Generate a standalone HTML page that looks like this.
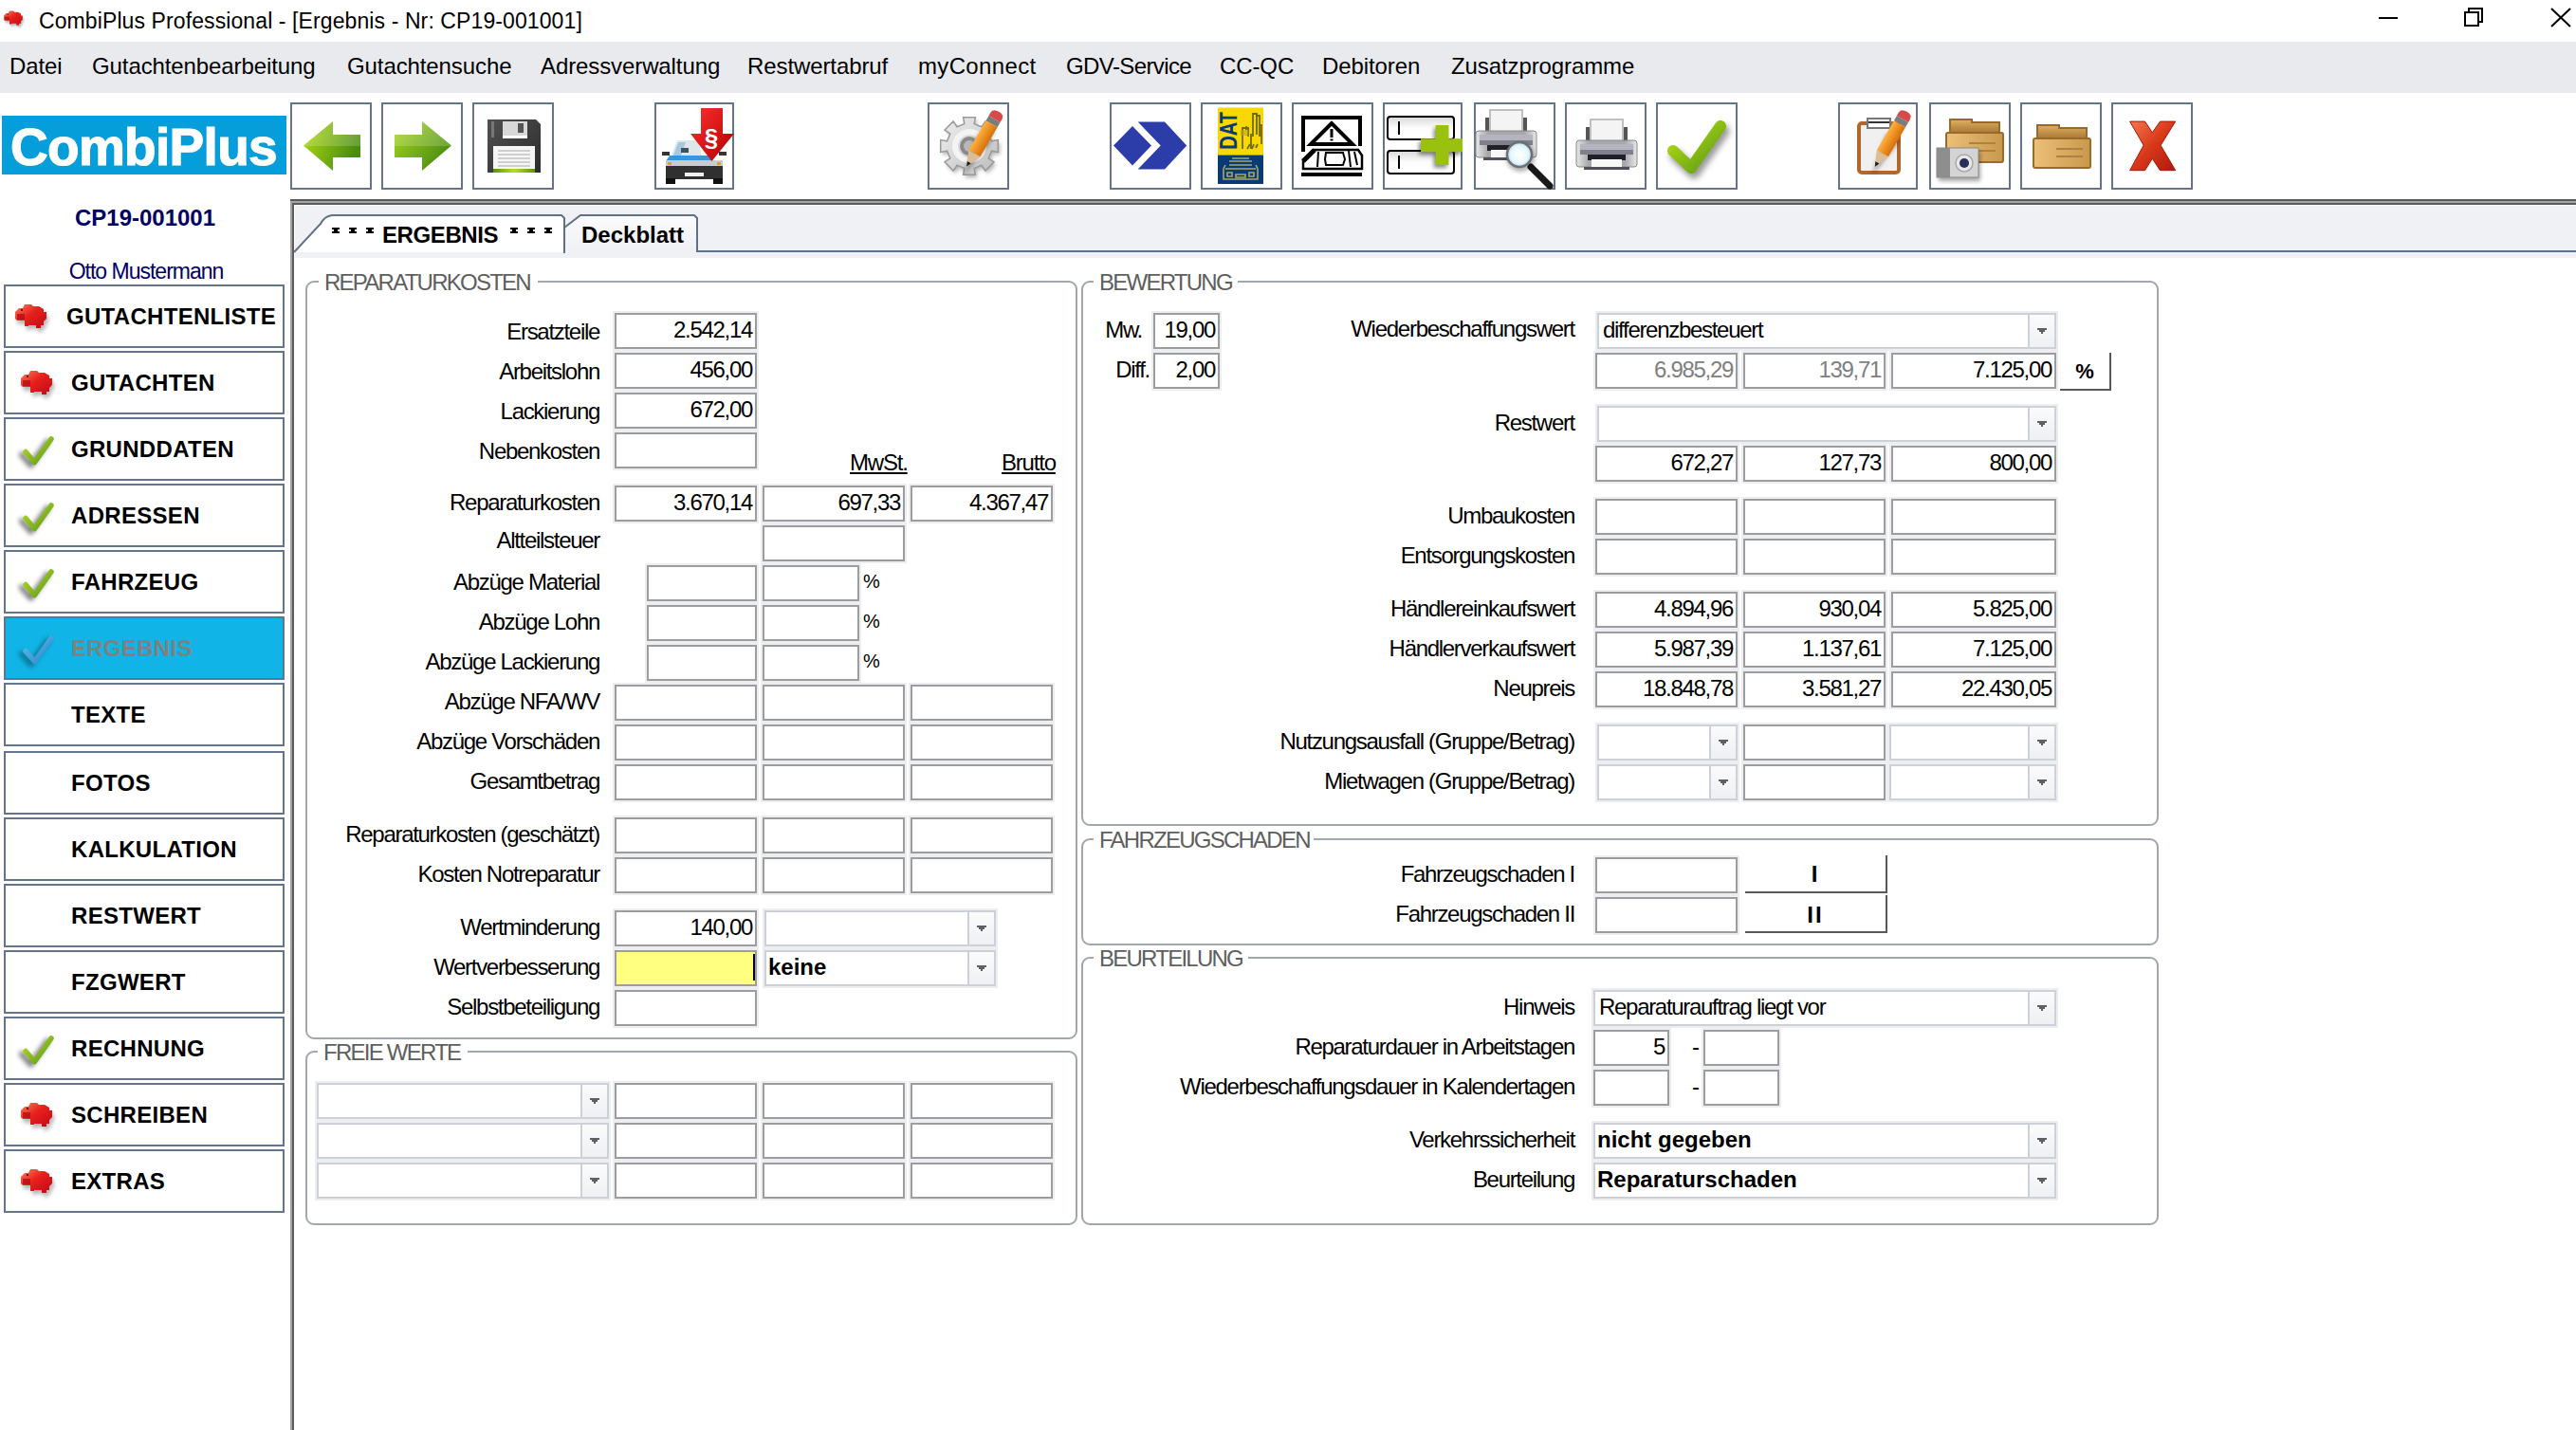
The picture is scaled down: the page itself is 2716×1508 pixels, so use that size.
<!DOCTYPE html><html><head><meta charset="utf-8"><style>
html,body{margin:0;padding:0;}
body{width:2716px;height:1508px;position:relative;overflow:hidden;background:#fff;font-family:"Liberation Sans", sans-serif;}
.t{position:absolute;white-space:pre;font-family:"Liberation Sans", sans-serif;}
</style></head><body>
<div class="t" style="left:41px;top:11px;font-size:23px;line-height:23px;font-weight:400;color:#000;letter-spacing:0.1px;">CombiPlus Professional - [Ergebnis - Nr: CP19-001001]</div>
<div style="position:absolute;left:2508px;top:18px;width:20px;height:2px;box-sizing:border-box;background:#000;"></div>
<div style="position:absolute;left:2598px;top:12px;width:16px;height:16px;box-sizing:border-box;border:2px solid #000;background:#fff;"></div>
<div style="position:absolute;left:2602px;top:8px;width:16px;height:4px;border-top:2px solid #000;border-right:2px solid #000;box-sizing:border-box;"></div>
<div style="position:absolute;left:2614px;top:8px;width:4px;height:16px;border-right:2px solid #000;box-sizing:border-box;"></div>
<div style="position:absolute;left:2602px;top:8px;width:2px;height:4px;box-sizing:border-box;background:#000;"></div>
<div style="position:absolute;left:2614px;top:22px;width:4px;height:2px;box-sizing:border-box;background:#000;"></div>
<svg style="position:absolute;left:2689px;top:8px" width="22" height="21"><path d="M1 1L21 20M21 1L1 20" stroke="#000" stroke-width="2"/></svg>
<div style="position:absolute;left:0px;top:44px;width:2716px;height:54px;box-sizing:border-box;background:#e9eaee;"></div>
<div class="t" style="left:10px;top:58px;font-size:24px;line-height:24px;font-weight:400;color:#000;letter-spacing:-0.1px;">Datei</div>
<div class="t" style="left:97px;top:58px;font-size:24px;line-height:24px;font-weight:400;color:#000;letter-spacing:-0.1px;">Gutachtenbearbeitung</div>
<div class="t" style="left:366px;top:58px;font-size:24px;line-height:24px;font-weight:400;color:#000;letter-spacing:-0.1px;">Gutachtensuche</div>
<div class="t" style="left:570px;top:58px;font-size:24px;line-height:24px;font-weight:400;color:#000;letter-spacing:-0.1px;">Adressverwaltung</div>
<div class="t" style="left:788px;top:58px;font-size:24px;line-height:24px;font-weight:400;color:#000;letter-spacing:-0.1px;">Restwertabruf</div>
<div class="t" style="left:968px;top:58px;font-size:24px;line-height:24px;font-weight:400;color:#000;letter-spacing:0.35px;">myConnect</div>
<div class="t" style="left:1124px;top:58px;font-size:24px;line-height:24px;font-weight:400;color:#000;letter-spacing:-0.6px;">GDV-Service</div>
<div class="t" style="left:1286px;top:58px;font-size:24px;line-height:24px;font-weight:400;color:#000;letter-spacing:-0.1px;">CC-QC</div>
<div class="t" style="left:1394px;top:58px;font-size:24px;line-height:24px;font-weight:400;color:#000;letter-spacing:-0.1px;">Debitoren</div>
<div class="t" style="left:1530px;top:58px;font-size:24px;line-height:24px;font-weight:400;color:#000;letter-spacing:-0.1px;">Zusatzprogramme</div>
<div style="position:absolute;left:2px;top:122px;width:300px;height:62px;box-sizing:border-box;background:#069ddb;"></div>
<div class="t" style="left:11px;top:128px;font-size:55px;line-height:55px;font-weight:700;color:#fff;letter-spacing:-0.7px;-webkit-text-stroke:1.2px #fff;">CombiPlus</div>
<div style="position:absolute;left:306px;top:108px;width:86px;height:92px;box-sizing:border-box;border:2px solid #63748c;background:#fff;"></div>
<div style="position:absolute;left:402px;top:108px;width:86px;height:92px;box-sizing:border-box;border:2px solid #63748c;background:#fff;"></div>
<div style="position:absolute;left:498px;top:108px;width:86px;height:92px;box-sizing:border-box;border:2px solid #63748c;background:#fff;"></div>
<div style="position:absolute;left:690px;top:108px;width:84px;height:92px;box-sizing:border-box;border:2px solid #63748c;background:#fff;"></div>
<div style="position:absolute;left:978px;top:108px;width:86px;height:92px;box-sizing:border-box;border:2px solid #63748c;background:#fff;"></div>
<div style="position:absolute;left:1170px;top:108px;width:86px;height:92px;box-sizing:border-box;border:2px solid #63748c;background:#fff;"></div>
<div style="position:absolute;left:1266px;top:108px;width:86px;height:92px;box-sizing:border-box;border:2px solid #63748c;background:#fff;"></div>
<div style="position:absolute;left:1362px;top:108px;width:86px;height:92px;box-sizing:border-box;border:2px solid #63748c;background:#fff;"></div>
<div style="position:absolute;left:1458px;top:108px;width:84px;height:92px;box-sizing:border-box;border:2px solid #63748c;background:#fff;"></div>
<div style="position:absolute;left:1554px;top:108px;width:86px;height:92px;box-sizing:border-box;border:2px solid #63748c;background:#fff;"></div>
<div style="position:absolute;left:1650px;top:108px;width:86px;height:92px;box-sizing:border-box;border:2px solid #63748c;background:#fff;"></div>
<div style="position:absolute;left:1746px;top:108px;width:86px;height:92px;box-sizing:border-box;border:2px solid #63748c;background:#fff;"></div>
<div style="position:absolute;left:1938px;top:108px;width:84px;height:92px;box-sizing:border-box;border:2px solid #63748c;background:#fff;"></div>
<div style="position:absolute;left:2034px;top:108px;width:86px;height:92px;box-sizing:border-box;border:2px solid #63748c;background:#fff;"></div>
<div style="position:absolute;left:2130px;top:108px;width:86px;height:92px;box-sizing:border-box;border:2px solid #63748c;background:#fff;"></div>
<div style="position:absolute;left:2226px;top:108px;width:86px;height:92px;box-sizing:border-box;border:2px solid #63748c;background:#fff;"></div>
<div class="t" style="left:-347px;width:1000px;text-align:center;top:218px;font-size:24px;line-height:24px;font-weight:700;color:#000066;letter-spacing:0px;">CP19-001001</div>
<div class="t" style="left:-346px;width:1000px;text-align:center;top:275px;font-size:23px;line-height:23px;font-weight:400;color:#000066;letter-spacing:-1.0px;">Otto Mustermann</div>
<div style="position:absolute;left:4px;top:300px;width:296px;height:67px;box-sizing:border-box;border:2px solid #63748c;background:#fff;"></div>
<div class="t" style="left:70px;top:322px;font-size:24px;line-height:24px;font-weight:700;color:#000;letter-spacing:0.3px;">GUTACHTENLISTE</div>
<div style="position:absolute;left:4px;top:370px;width:296px;height:67px;box-sizing:border-box;border:2px solid #63748c;background:#fff;"></div>
<div class="t" style="left:75px;top:392px;font-size:24px;line-height:24px;font-weight:700;color:#000;letter-spacing:0.3px;">GUTACHTEN</div>
<div style="position:absolute;left:4px;top:440px;width:296px;height:67px;box-sizing:border-box;border:2px solid #63748c;background:#fff;"></div>
<div class="t" style="left:75px;top:462px;font-size:24px;line-height:24px;font-weight:700;color:#000;letter-spacing:0.3px;">GRUNDDATEN</div>
<div style="position:absolute;left:4px;top:510px;width:296px;height:67px;box-sizing:border-box;border:2px solid #63748c;background:#fff;"></div>
<div class="t" style="left:75px;top:532px;font-size:24px;line-height:24px;font-weight:700;color:#000;letter-spacing:0.3px;">ADRESSEN</div>
<div style="position:absolute;left:4px;top:580px;width:296px;height:67px;box-sizing:border-box;border:2px solid #63748c;background:#fff;"></div>
<div class="t" style="left:75px;top:602px;font-size:24px;line-height:24px;font-weight:700;color:#000;letter-spacing:0.3px;">FAHRZEUG</div>
<div style="position:absolute;left:4px;top:650px;width:296px;height:67px;box-sizing:border-box;border:2px solid #63748c;background:#10b4e6;"></div>
<div class="t" style="left:75px;top:672px;font-size:24px;line-height:24px;font-weight:700;color:#808080;letter-spacing:0.3px;">ERGEBNIS</div>
<div style="position:absolute;left:4px;top:720px;width:296px;height:67px;box-sizing:border-box;border:2px solid #63748c;background:#fff;"></div>
<div class="t" style="left:75px;top:742px;font-size:24px;line-height:24px;font-weight:700;color:#000;letter-spacing:0.3px;">TEXTE</div>
<div style="position:absolute;left:4px;top:792px;width:296px;height:67px;box-sizing:border-box;border:2px solid #63748c;background:#fff;"></div>
<div class="t" style="left:75px;top:814px;font-size:24px;line-height:24px;font-weight:700;color:#000;letter-spacing:0.3px;">FOTOS</div>
<div style="position:absolute;left:4px;top:862px;width:296px;height:67px;box-sizing:border-box;border:2px solid #63748c;background:#fff;"></div>
<div class="t" style="left:75px;top:884px;font-size:24px;line-height:24px;font-weight:700;color:#000;letter-spacing:0.3px;">KALKULATION</div>
<div style="position:absolute;left:4px;top:932px;width:296px;height:67px;box-sizing:border-box;border:2px solid #63748c;background:#fff;"></div>
<div class="t" style="left:75px;top:954px;font-size:24px;line-height:24px;font-weight:700;color:#000;letter-spacing:0.3px;">RESTWERT</div>
<div style="position:absolute;left:4px;top:1002px;width:296px;height:67px;box-sizing:border-box;border:2px solid #63748c;background:#fff;"></div>
<div class="t" style="left:75px;top:1024px;font-size:24px;line-height:24px;font-weight:700;color:#000;letter-spacing:0.3px;">FZGWERT</div>
<div style="position:absolute;left:4px;top:1072px;width:296px;height:67px;box-sizing:border-box;border:2px solid #63748c;background:#fff;"></div>
<div class="t" style="left:75px;top:1094px;font-size:24px;line-height:24px;font-weight:700;color:#000;letter-spacing:0.3px;">RECHNUNG</div>
<div style="position:absolute;left:4px;top:1142px;width:296px;height:67px;box-sizing:border-box;border:2px solid #63748c;background:#fff;"></div>
<div class="t" style="left:75px;top:1164px;font-size:24px;line-height:24px;font-weight:700;color:#000;letter-spacing:0.3px;">SCHREIBEN</div>
<div style="position:absolute;left:4px;top:1212px;width:296px;height:67px;box-sizing:border-box;border:2px solid #63748c;background:#fff;"></div>
<div class="t" style="left:75px;top:1234px;font-size:24px;line-height:24px;font-weight:700;color:#000;letter-spacing:0.3px;">EXTRAS</div>
<div style="position:absolute;left:306px;top:210px;width:2410px;height:2px;box-sizing:border-box;background:#595959;"></div>
<div style="position:absolute;left:306px;top:212px;width:2410px;height:2px;box-sizing:border-box;background:#a3a3a3;"></div>
<div style="position:absolute;left:308px;top:214px;width:2408px;height:2px;box-sizing:border-box;background:#5c5c5c;"></div>
<div style="position:absolute;left:306px;top:212px;width:2px;height:1296px;box-sizing:border-box;background:#a3a3a3;"></div>
<div style="position:absolute;left:308px;top:214px;width:2px;height:1294px;box-sizing:border-box;background:#5c5c5c;"></div>
<div style="position:absolute;left:310px;top:216px;width:2406px;height:1292px;box-sizing:border-box;background:#fff;"></div>
<div style="position:absolute;left:310px;top:216px;width:2406px;height:56px;box-sizing:border-box;background:#f0f1f5;border-top:1px solid #fff;border-left:1px solid #fff;"></div>
<svg style="position:absolute;left:0;top:0" width="2716" height="300"><defs><linearGradient id="tg" x1="0" y1="0" x2="0" y2="1"><stop offset="0" stop-color="#fbfbfc"/><stop offset="1" stop-color="#eff0f4"/></linearGradient></defs><path d="M594 266V240L612 227H732L735 230V266Z" fill="url(#tg)"/><path d="M595 240L612 227H732L735 230V266" fill="none" stroke="#5f7189" stroke-width="2"/><path d="M735 265H2716" stroke="#5f7189" stroke-width="2"/><path d="M310 266L338 236Q342 228 350 227H592L595 230V266Z" fill="#fff"/><path d="M310 266L338 236Q342 228 350 227H592L595 230V267" fill="none" stroke="#5f7189" stroke-width="2"/></svg>
<div class="t" style="left:403px;top:236px;font-size:24px;line-height:24px;font-weight:700;color:#000;letter-spacing:-0.4px;">ERGEBNIS</div>
<svg style="position:absolute;left:350px;top:240px" width="8" height="6"><path d="M0 0H8V2H6V4H8V6H0V4H2V2H0Z" fill="#000"/></svg>
<svg style="position:absolute;left:368px;top:240px" width="8" height="6"><path d="M0 0H8V2H6V4H8V6H0V4H2V2H0Z" fill="#000"/></svg>
<svg style="position:absolute;left:386px;top:240px" width="8" height="6"><path d="M0 0H8V2H6V4H8V6H0V4H2V2H0Z" fill="#000"/></svg>
<svg style="position:absolute;left:538px;top:240px" width="8" height="6"><path d="M0 0H8V2H6V4H8V6H0V4H2V2H0Z" fill="#000"/></svg>
<svg style="position:absolute;left:556px;top:240px" width="8" height="6"><path d="M0 0H8V2H6V4H8V6H0V4H2V2H0Z" fill="#000"/></svg>
<svg style="position:absolute;left:574px;top:240px" width="8" height="6"><path d="M0 0H8V2H6V4H8V6H0V4H2V2H0Z" fill="#000"/></svg>
<div class="t" style="left:613px;top:236px;font-size:24px;line-height:24px;font-weight:700;color:#000;letter-spacing:0px;">Deckblatt</div>
<div style="position:absolute;left:322px;top:296px;width:814px;height:800px;box-sizing:border-box;border:2px solid #a2a7ad;border-radius:9px;"></div>
<div style="position:absolute;left:336px;top:294px;width:231px;height:8px;box-sizing:border-box;background:#fff;"></div>
<div class="t" style="left:342px;top:286px;font-size:24px;line-height:24px;font-weight:400;color:#5e5e5e;letter-spacing:-1.75px;">REPARATURKOSTEN</div>
<div style="position:absolute;left:322px;top:1108px;width:814px;height:184px;box-sizing:border-box;border:2px solid #a2a7ad;border-radius:9px;"></div>
<div style="position:absolute;left:335px;top:1106px;width:158px;height:8px;box-sizing:border-box;background:#fff;"></div>
<div class="t" style="left:341px;top:1098px;font-size:24px;line-height:24px;font-weight:400;color:#5e5e5e;letter-spacing:-1.75px;">FREIE WERTE</div>
<div style="position:absolute;left:1140px;top:296px;width:1136px;height:575px;box-sizing:border-box;border:2px solid #a2a7ad;border-radius:9px;"></div>
<div style="position:absolute;left:1153px;top:294px;width:152px;height:8px;box-sizing:border-box;background:#fff;"></div>
<div class="t" style="left:1159px;top:286px;font-size:24px;line-height:24px;font-weight:400;color:#5e5e5e;letter-spacing:-1.75px;">BEWERTUNG</div>
<div style="position:absolute;left:1140px;top:884px;width:1136px;height:113px;box-sizing:border-box;border:2px solid #a2a7ad;border-radius:9px;"></div>
<div style="position:absolute;left:1153px;top:882px;width:232px;height:8px;box-sizing:border-box;background:#fff;"></div>
<div class="t" style="left:1159px;top:874px;font-size:24px;line-height:24px;font-weight:400;color:#5e5e5e;letter-spacing:-1.75px;">FAHRZEUGSCHADEN</div>
<div style="position:absolute;left:1140px;top:1009px;width:1136px;height:283px;box-sizing:border-box;border:2px solid #a2a7ad;border-radius:9px;"></div>
<div style="position:absolute;left:1153px;top:1007px;width:163px;height:8px;box-sizing:border-box;background:#fff;"></div>
<div class="t" style="left:1159px;top:999px;font-size:24px;line-height:24px;font-weight:400;color:#5e5e5e;letter-spacing:-1.75px;">BEURTEILUNG</div>
<div class="t" style="left:-368px;width:1000px;text-align:right;top:338px;font-size:24px;line-height:24px;font-weight:400;color:#000;letter-spacing:-1.3px;">Ersatzteile</div>
<div style="position:absolute;left:646px;top:328px;width:154px;height:42px;box-sizing:border-box;border:2px solid #eceef2;"></div>
<div style="position:absolute;left:648px;top:330px;width:150px;height:38px;box-sizing:border-box;border:2px solid #9d9d9d;background:#fff;"></div>
<div class="t" style="left:-207px;width:1000px;text-align:right;top:336px;font-size:24px;line-height:24px;font-weight:400;color:#000;letter-spacing:-1.3px;">2.542,14</div>
<div class="t" style="left:-368px;width:1000px;text-align:right;top:380px;font-size:24px;line-height:24px;font-weight:400;color:#000;letter-spacing:-1.3px;">Arbeitslohn</div>
<div style="position:absolute;left:646px;top:370px;width:154px;height:42px;box-sizing:border-box;border:2px solid #eceef2;"></div>
<div style="position:absolute;left:648px;top:372px;width:150px;height:38px;box-sizing:border-box;border:2px solid #9d9d9d;background:#fff;"></div>
<div class="t" style="left:-207px;width:1000px;text-align:right;top:378px;font-size:24px;line-height:24px;font-weight:400;color:#000;letter-spacing:-1.3px;">456,00</div>
<div class="t" style="left:-368px;width:1000px;text-align:right;top:422px;font-size:24px;line-height:24px;font-weight:400;color:#000;letter-spacing:-1.3px;">Lackierung</div>
<div style="position:absolute;left:646px;top:412px;width:154px;height:42px;box-sizing:border-box;border:2px solid #eceef2;"></div>
<div style="position:absolute;left:648px;top:414px;width:150px;height:38px;box-sizing:border-box;border:2px solid #9d9d9d;background:#fff;"></div>
<div class="t" style="left:-207px;width:1000px;text-align:right;top:420px;font-size:24px;line-height:24px;font-weight:400;color:#000;letter-spacing:-1.3px;">672,00</div>
<div class="t" style="left:-368px;width:1000px;text-align:right;top:464px;font-size:24px;line-height:24px;font-weight:400;color:#000;letter-spacing:-1.3px;">Nebenkosten</div>
<div style="position:absolute;left:646px;top:454px;width:154px;height:42px;box-sizing:border-box;border:2px solid #eceef2;"></div>
<div style="position:absolute;left:648px;top:456px;width:150px;height:38px;box-sizing:border-box;border:2px solid #9d9d9d;background:#fff;"></div>
<div class="t" style="left:896px;top:476px;font-size:24px;line-height:24px;font-weight:400;color:#000;letter-spacing:-1.2px;text-decoration:underline;">MwSt.</div>
<div class="t" style="left:1056px;top:476px;font-size:24px;line-height:24px;font-weight:400;color:#000;letter-spacing:-1.2px;text-decoration:underline;">Brutto</div>
<div class="t" style="left:-368px;width:1000px;text-align:right;top:518px;font-size:24px;line-height:24px;font-weight:400;color:#000;letter-spacing:-1.3px;">Reparaturkosten</div>
<div style="position:absolute;left:646px;top:510px;width:154px;height:42px;box-sizing:border-box;border:2px solid #eceef2;"></div>
<div style="position:absolute;left:648px;top:512px;width:150px;height:38px;box-sizing:border-box;border:2px solid #9d9d9d;background:#fff;"></div>
<div class="t" style="left:-207px;width:1000px;text-align:right;top:518px;font-size:24px;line-height:24px;font-weight:400;color:#000;letter-spacing:-1.3px;">3.670,14</div>
<div style="position:absolute;left:802px;top:510px;width:154px;height:42px;box-sizing:border-box;border:2px solid #eceef2;"></div>
<div style="position:absolute;left:804px;top:512px;width:150px;height:38px;box-sizing:border-box;border:2px solid #9d9d9d;background:#fff;"></div>
<div class="t" style="left:-51px;width:1000px;text-align:right;top:518px;font-size:24px;line-height:24px;font-weight:400;color:#000;letter-spacing:-1.3px;">697,33</div>
<div style="position:absolute;left:958px;top:510px;width:154px;height:42px;box-sizing:border-box;border:2px solid #eceef2;"></div>
<div style="position:absolute;left:960px;top:512px;width:150px;height:38px;box-sizing:border-box;border:2px solid #9d9d9d;background:#fff;"></div>
<div class="t" style="left:105px;width:1000px;text-align:right;top:518px;font-size:24px;line-height:24px;font-weight:400;color:#000;letter-spacing:-1.3px;">4.367,47</div>
<div class="t" style="left:-368px;width:1000px;text-align:right;top:558px;font-size:24px;line-height:24px;font-weight:400;color:#000;letter-spacing:-1.3px;">Altteilsteuer</div>
<div style="position:absolute;left:802px;top:552px;width:154px;height:42px;box-sizing:border-box;border:2px solid #eceef2;"></div>
<div style="position:absolute;left:804px;top:554px;width:150px;height:38px;box-sizing:border-box;border:2px solid #9d9d9d;background:#fff;"></div>
<div class="t" style="left:-368px;width:1000px;text-align:right;top:602px;font-size:24px;line-height:24px;font-weight:400;color:#000;letter-spacing:-1.3px;">Abzüge Material</div>
<div style="position:absolute;left:680px;top:594px;width:120px;height:42px;box-sizing:border-box;border:2px solid #eceef2;"></div>
<div style="position:absolute;left:682px;top:596px;width:116px;height:38px;box-sizing:border-box;border:2px solid #9d9d9d;background:#fff;"></div>
<div style="position:absolute;left:802px;top:594px;width:106px;height:42px;box-sizing:border-box;border:2px solid #eceef2;"></div>
<div style="position:absolute;left:804px;top:596px;width:102px;height:38px;box-sizing:border-box;border:2px solid #9d9d9d;background:#fff;"></div>
<div class="t" style="left:910px;top:603px;font-size:20px;line-height:20px;font-weight:400;color:#000;letter-spacing:-1px;">%</div>
<div class="t" style="left:-368px;width:1000px;text-align:right;top:644px;font-size:24px;line-height:24px;font-weight:400;color:#000;letter-spacing:-1.3px;">Abzüge Lohn</div>
<div style="position:absolute;left:680px;top:636px;width:120px;height:42px;box-sizing:border-box;border:2px solid #eceef2;"></div>
<div style="position:absolute;left:682px;top:638px;width:116px;height:38px;box-sizing:border-box;border:2px solid #9d9d9d;background:#fff;"></div>
<div style="position:absolute;left:802px;top:636px;width:106px;height:42px;box-sizing:border-box;border:2px solid #eceef2;"></div>
<div style="position:absolute;left:804px;top:638px;width:102px;height:38px;box-sizing:border-box;border:2px solid #9d9d9d;background:#fff;"></div>
<div class="t" style="left:910px;top:645px;font-size:20px;line-height:20px;font-weight:400;color:#000;letter-spacing:-1px;">%</div>
<div class="t" style="left:-368px;width:1000px;text-align:right;top:686px;font-size:24px;line-height:24px;font-weight:400;color:#000;letter-spacing:-1.3px;">Abzüge Lackierung</div>
<div style="position:absolute;left:680px;top:678px;width:120px;height:42px;box-sizing:border-box;border:2px solid #eceef2;"></div>
<div style="position:absolute;left:682px;top:680px;width:116px;height:38px;box-sizing:border-box;border:2px solid #9d9d9d;background:#fff;"></div>
<div style="position:absolute;left:802px;top:678px;width:106px;height:42px;box-sizing:border-box;border:2px solid #eceef2;"></div>
<div style="position:absolute;left:804px;top:680px;width:102px;height:38px;box-sizing:border-box;border:2px solid #9d9d9d;background:#fff;"></div>
<div class="t" style="left:910px;top:687px;font-size:20px;line-height:20px;font-weight:400;color:#000;letter-spacing:-1px;">%</div>
<div class="t" style="left:-368px;width:1000px;text-align:right;top:728px;font-size:24px;line-height:24px;font-weight:400;color:#000;letter-spacing:-1.3px;">Abzüge NFA/WV</div>
<div style="position:absolute;left:646px;top:720px;width:154px;height:42px;box-sizing:border-box;border:2px solid #eceef2;"></div>
<div style="position:absolute;left:648px;top:722px;width:150px;height:38px;box-sizing:border-box;border:2px solid #9d9d9d;background:#fff;"></div>
<div style="position:absolute;left:802px;top:720px;width:154px;height:42px;box-sizing:border-box;border:2px solid #eceef2;"></div>
<div style="position:absolute;left:804px;top:722px;width:150px;height:38px;box-sizing:border-box;border:2px solid #9d9d9d;background:#fff;"></div>
<div style="position:absolute;left:958px;top:720px;width:154px;height:42px;box-sizing:border-box;border:2px solid #eceef2;"></div>
<div style="position:absolute;left:960px;top:722px;width:150px;height:38px;box-sizing:border-box;border:2px solid #9d9d9d;background:#fff;"></div>
<div class="t" style="left:-368px;width:1000px;text-align:right;top:770px;font-size:24px;line-height:24px;font-weight:400;color:#000;letter-spacing:-1.3px;">Abzüge Vorschäden</div>
<div style="position:absolute;left:646px;top:762px;width:154px;height:42px;box-sizing:border-box;border:2px solid #eceef2;"></div>
<div style="position:absolute;left:648px;top:764px;width:150px;height:38px;box-sizing:border-box;border:2px solid #9d9d9d;background:#fff;"></div>
<div style="position:absolute;left:802px;top:762px;width:154px;height:42px;box-sizing:border-box;border:2px solid #eceef2;"></div>
<div style="position:absolute;left:804px;top:764px;width:150px;height:38px;box-sizing:border-box;border:2px solid #9d9d9d;background:#fff;"></div>
<div style="position:absolute;left:958px;top:762px;width:154px;height:42px;box-sizing:border-box;border:2px solid #eceef2;"></div>
<div style="position:absolute;left:960px;top:764px;width:150px;height:38px;box-sizing:border-box;border:2px solid #9d9d9d;background:#fff;"></div>
<div class="t" style="left:-368px;width:1000px;text-align:right;top:812px;font-size:24px;line-height:24px;font-weight:400;color:#000;letter-spacing:-1.3px;">Gesamtbetrag</div>
<div style="position:absolute;left:646px;top:804px;width:154px;height:42px;box-sizing:border-box;border:2px solid #eceef2;"></div>
<div style="position:absolute;left:648px;top:806px;width:150px;height:38px;box-sizing:border-box;border:2px solid #9d9d9d;background:#fff;"></div>
<div style="position:absolute;left:802px;top:804px;width:154px;height:42px;box-sizing:border-box;border:2px solid #eceef2;"></div>
<div style="position:absolute;left:804px;top:806px;width:150px;height:38px;box-sizing:border-box;border:2px solid #9d9d9d;background:#fff;"></div>
<div style="position:absolute;left:958px;top:804px;width:154px;height:42px;box-sizing:border-box;border:2px solid #eceef2;"></div>
<div style="position:absolute;left:960px;top:806px;width:150px;height:38px;box-sizing:border-box;border:2px solid #9d9d9d;background:#fff;"></div>
<div class="t" style="left:-368px;width:1000px;text-align:right;top:868px;font-size:24px;line-height:24px;font-weight:400;color:#000;letter-spacing:-1.3px;">Reparaturkosten (geschätzt)</div>
<div style="position:absolute;left:646px;top:860px;width:154px;height:42px;box-sizing:border-box;border:2px solid #eceef2;"></div>
<div style="position:absolute;left:648px;top:862px;width:150px;height:38px;box-sizing:border-box;border:2px solid #9d9d9d;background:#fff;"></div>
<div style="position:absolute;left:802px;top:860px;width:154px;height:42px;box-sizing:border-box;border:2px solid #eceef2;"></div>
<div style="position:absolute;left:804px;top:862px;width:150px;height:38px;box-sizing:border-box;border:2px solid #9d9d9d;background:#fff;"></div>
<div style="position:absolute;left:958px;top:860px;width:154px;height:42px;box-sizing:border-box;border:2px solid #eceef2;"></div>
<div style="position:absolute;left:960px;top:862px;width:150px;height:38px;box-sizing:border-box;border:2px solid #9d9d9d;background:#fff;"></div>
<div class="t" style="left:-368px;width:1000px;text-align:right;top:910px;font-size:24px;line-height:24px;font-weight:400;color:#000;letter-spacing:-1.3px;">Kosten Notreparatur</div>
<div style="position:absolute;left:646px;top:902px;width:154px;height:42px;box-sizing:border-box;border:2px solid #eceef2;"></div>
<div style="position:absolute;left:648px;top:904px;width:150px;height:38px;box-sizing:border-box;border:2px solid #9d9d9d;background:#fff;"></div>
<div style="position:absolute;left:802px;top:902px;width:154px;height:42px;box-sizing:border-box;border:2px solid #eceef2;"></div>
<div style="position:absolute;left:804px;top:904px;width:150px;height:38px;box-sizing:border-box;border:2px solid #9d9d9d;background:#fff;"></div>
<div style="position:absolute;left:958px;top:902px;width:154px;height:42px;box-sizing:border-box;border:2px solid #eceef2;"></div>
<div style="position:absolute;left:960px;top:904px;width:150px;height:38px;box-sizing:border-box;border:2px solid #9d9d9d;background:#fff;"></div>
<div class="t" style="left:-368px;width:1000px;text-align:right;top:966px;font-size:24px;line-height:24px;font-weight:400;color:#000;letter-spacing:-1.3px;">Wertminderung</div>
<div style="position:absolute;left:646px;top:958px;width:154px;height:42px;box-sizing:border-box;border:2px solid #eceef2;"></div>
<div style="position:absolute;left:648px;top:960px;width:150px;height:38px;box-sizing:border-box;border:2px solid #9d9d9d;background:#fff;"></div>
<div class="t" style="left:-207px;width:1000px;text-align:right;top:966px;font-size:24px;line-height:24px;font-weight:400;color:#000;letter-spacing:-1.3px;">140,00</div>
<div style="position:absolute;left:804px;top:958px;width:248px;height:42px;box-sizing:border-box;border:2px solid #eceef2;"></div>
<div style="position:absolute;left:806px;top:960px;width:244px;height:38px;box-sizing:border-box;border:2px solid #cdd0d6;background:#fff;"></div>
<div style="position:absolute;left:1020px;top:962px;width:28px;height:34px;box-sizing:border-box;border-left:2px solid #cdd0d6;background:linear-gradient(#fbfbfc,#eef0f3);"></div>
<svg style="position:absolute;left:1030px;top:976px" width="10" height="6"><path d="M0 0h10v2h-2v2h-2v2h-2v-2h-2v-2h-2z" fill="#606060"/></svg>
<div class="t" style="left:-368px;width:1000px;text-align:right;top:1008px;font-size:24px;line-height:24px;font-weight:400;color:#000;letter-spacing:-1.3px;">Wertverbesserung</div>
<div style="position:absolute;left:646px;top:1000px;width:154px;height:42px;box-sizing:border-box;border:2px solid #eceef2;"></div>
<div style="position:absolute;left:648px;top:1002px;width:150px;height:38px;box-sizing:border-box;border:2px solid #9d9d9d;background:#ffff80;"></div>
<div style="position:absolute;left:794px;top:1006px;width:2px;height:28px;box-sizing:border-box;background:#000040;"></div>
<div style="position:absolute;left:804px;top:1000px;width:248px;height:42px;box-sizing:border-box;border:2px solid #eceef2;"></div>
<div style="position:absolute;left:806px;top:1002px;width:244px;height:38px;box-sizing:border-box;border:2px solid #cdd0d6;background:#fff;"></div>
<div style="position:absolute;left:1020px;top:1004px;width:28px;height:34px;box-sizing:border-box;border-left:2px solid #cdd0d6;background:linear-gradient(#fbfbfc,#eef0f3);"></div>
<svg style="position:absolute;left:1030px;top:1018px" width="10" height="6"><path d="M0 0h10v2h-2v2h-2v2h-2v-2h-2v-2h-2z" fill="#606060"/></svg>
<div class="t" style="left:810px;top:1008px;font-size:24px;line-height:24px;font-weight:700;color:#000;letter-spacing:0px;">keine</div>
<div class="t" style="left:-368px;width:1000px;text-align:right;top:1050px;font-size:24px;line-height:24px;font-weight:400;color:#000;letter-spacing:-1.3px;">Selbstbeteiligung</div>
<div style="position:absolute;left:646px;top:1042px;width:154px;height:42px;box-sizing:border-box;border:2px solid #eceef2;"></div>
<div style="position:absolute;left:648px;top:1044px;width:150px;height:38px;box-sizing:border-box;border:2px solid #9d9d9d;background:#fff;"></div>
<div style="position:absolute;left:332px;top:1140px;width:312px;height:42px;box-sizing:border-box;border:2px solid #eceef2;"></div>
<div style="position:absolute;left:334px;top:1142px;width:308px;height:38px;box-sizing:border-box;border:2px solid #cdd0d6;background:#fff;"></div>
<div style="position:absolute;left:612px;top:1144px;width:28px;height:34px;box-sizing:border-box;border-left:2px solid #cdd0d6;background:linear-gradient(#fbfbfc,#eef0f3);"></div>
<svg style="position:absolute;left:622px;top:1158px" width="10" height="6"><path d="M0 0h10v2h-2v2h-2v2h-2v-2h-2v-2h-2z" fill="#606060"/></svg>
<div style="position:absolute;left:646px;top:1140px;width:154px;height:42px;box-sizing:border-box;border:2px solid #eceef2;"></div>
<div style="position:absolute;left:648px;top:1142px;width:150px;height:38px;box-sizing:border-box;border:2px solid #9d9d9d;background:#fff;"></div>
<div style="position:absolute;left:802px;top:1140px;width:154px;height:42px;box-sizing:border-box;border:2px solid #eceef2;"></div>
<div style="position:absolute;left:804px;top:1142px;width:150px;height:38px;box-sizing:border-box;border:2px solid #9d9d9d;background:#fff;"></div>
<div style="position:absolute;left:958px;top:1140px;width:154px;height:42px;box-sizing:border-box;border:2px solid #eceef2;"></div>
<div style="position:absolute;left:960px;top:1142px;width:150px;height:38px;box-sizing:border-box;border:2px solid #9d9d9d;background:#fff;"></div>
<div style="position:absolute;left:332px;top:1182px;width:312px;height:42px;box-sizing:border-box;border:2px solid #eceef2;"></div>
<div style="position:absolute;left:334px;top:1184px;width:308px;height:38px;box-sizing:border-box;border:2px solid #cdd0d6;background:#fff;"></div>
<div style="position:absolute;left:612px;top:1186px;width:28px;height:34px;box-sizing:border-box;border-left:2px solid #cdd0d6;background:linear-gradient(#fbfbfc,#eef0f3);"></div>
<svg style="position:absolute;left:622px;top:1200px" width="10" height="6"><path d="M0 0h10v2h-2v2h-2v2h-2v-2h-2v-2h-2z" fill="#606060"/></svg>
<div style="position:absolute;left:646px;top:1182px;width:154px;height:42px;box-sizing:border-box;border:2px solid #eceef2;"></div>
<div style="position:absolute;left:648px;top:1184px;width:150px;height:38px;box-sizing:border-box;border:2px solid #9d9d9d;background:#fff;"></div>
<div style="position:absolute;left:802px;top:1182px;width:154px;height:42px;box-sizing:border-box;border:2px solid #eceef2;"></div>
<div style="position:absolute;left:804px;top:1184px;width:150px;height:38px;box-sizing:border-box;border:2px solid #9d9d9d;background:#fff;"></div>
<div style="position:absolute;left:958px;top:1182px;width:154px;height:42px;box-sizing:border-box;border:2px solid #eceef2;"></div>
<div style="position:absolute;left:960px;top:1184px;width:150px;height:38px;box-sizing:border-box;border:2px solid #9d9d9d;background:#fff;"></div>
<div style="position:absolute;left:332px;top:1224px;width:312px;height:42px;box-sizing:border-box;border:2px solid #eceef2;"></div>
<div style="position:absolute;left:334px;top:1226px;width:308px;height:38px;box-sizing:border-box;border:2px solid #cdd0d6;background:#fff;"></div>
<div style="position:absolute;left:612px;top:1228px;width:28px;height:34px;box-sizing:border-box;border-left:2px solid #cdd0d6;background:linear-gradient(#fbfbfc,#eef0f3);"></div>
<svg style="position:absolute;left:622px;top:1242px" width="10" height="6"><path d="M0 0h10v2h-2v2h-2v2h-2v-2h-2v-2h-2z" fill="#606060"/></svg>
<div style="position:absolute;left:646px;top:1224px;width:154px;height:42px;box-sizing:border-box;border:2px solid #eceef2;"></div>
<div style="position:absolute;left:648px;top:1226px;width:150px;height:38px;box-sizing:border-box;border:2px solid #9d9d9d;background:#fff;"></div>
<div style="position:absolute;left:802px;top:1224px;width:154px;height:42px;box-sizing:border-box;border:2px solid #eceef2;"></div>
<div style="position:absolute;left:804px;top:1226px;width:150px;height:38px;box-sizing:border-box;border:2px solid #9d9d9d;background:#fff;"></div>
<div style="position:absolute;left:958px;top:1224px;width:154px;height:42px;box-sizing:border-box;border:2px solid #eceef2;"></div>
<div style="position:absolute;left:960px;top:1226px;width:150px;height:38px;box-sizing:border-box;border:2px solid #9d9d9d;background:#fff;"></div>
<div class="t" style="left:204px;width:1000px;text-align:right;top:336px;font-size:24px;line-height:24px;font-weight:400;color:#000;letter-spacing:-1.3px;">Mw.</div>
<div style="position:absolute;left:1214px;top:328px;width:74px;height:42px;box-sizing:border-box;border:2px solid #eceef2;"></div>
<div style="position:absolute;left:1216px;top:330px;width:70px;height:38px;box-sizing:border-box;border:2px solid #9d9d9d;background:#fff;"></div>
<div class="t" style="left:281px;width:1000px;text-align:right;top:336px;font-size:24px;line-height:24px;font-weight:400;color:#000;letter-spacing:-1.3px;">19,00</div>
<div class="t" style="left:212px;width:1000px;text-align:right;top:378px;font-size:24px;line-height:24px;font-weight:400;color:#000;letter-spacing:-1.3px;">Diff.</div>
<div style="position:absolute;left:1214px;top:370px;width:74px;height:42px;box-sizing:border-box;border:2px solid #eceef2;"></div>
<div style="position:absolute;left:1216px;top:372px;width:70px;height:38px;box-sizing:border-box;border:2px solid #9d9d9d;background:#fff;"></div>
<div class="t" style="left:281px;width:1000px;text-align:right;top:378px;font-size:24px;line-height:24px;font-weight:400;color:#000;letter-spacing:-1.3px;">2,00</div>
<div class="t" style="left:660px;width:1000px;text-align:right;top:335px;font-size:24px;line-height:24px;font-weight:400;color:#000;letter-spacing:-1.27px;">Wiederbeschaffungswert</div>
<div style="position:absolute;left:1682px;top:328px;width:488px;height:42px;box-sizing:border-box;border:2px solid #eceef2;"></div>
<div style="position:absolute;left:1684px;top:330px;width:484px;height:38px;box-sizing:border-box;border:2px solid #cdd0d6;background:#fff;"></div>
<div style="position:absolute;left:2138px;top:332px;width:28px;height:34px;box-sizing:border-box;border-left:2px solid #cdd0d6;background:linear-gradient(#fbfbfc,#eef0f3);"></div>
<svg style="position:absolute;left:2148px;top:346px" width="10" height="6"><path d="M0 0h10v2h-2v2h-2v2h-2v-2h-2v-2h-2z" fill="#606060"/></svg>
<div class="t" style="left:1690px;top:336px;font-size:24px;line-height:24px;font-weight:400;color:#000;letter-spacing:-1.3px;">differenzbesteuert</div>
<div style="position:absolute;left:1680px;top:370px;width:154px;height:42px;box-sizing:border-box;border:2px solid #eceef2;"></div>
<div style="position:absolute;left:1682px;top:372px;width:150px;height:38px;box-sizing:border-box;border:2px solid #9d9d9d;background:#fff;"></div>
<div class="t" style="left:827px;width:1000px;text-align:right;top:378px;font-size:24px;line-height:24px;font-weight:400;color:#808080;letter-spacing:-1.3px;">6.985,29</div>
<div style="position:absolute;left:1836px;top:370px;width:154px;height:42px;box-sizing:border-box;border:2px solid #eceef2;"></div>
<div style="position:absolute;left:1838px;top:372px;width:150px;height:38px;box-sizing:border-box;border:2px solid #9d9d9d;background:#fff;"></div>
<div class="t" style="left:983px;width:1000px;text-align:right;top:378px;font-size:24px;line-height:24px;font-weight:400;color:#808080;letter-spacing:-1.3px;">139,71</div>
<div style="position:absolute;left:1992px;top:370px;width:178px;height:42px;box-sizing:border-box;border:2px solid #eceef2;"></div>
<div style="position:absolute;left:1994px;top:372px;width:174px;height:38px;box-sizing:border-box;border:2px solid #9d9d9d;background:#fff;"></div>
<div class="t" style="left:1163px;width:1000px;text-align:right;top:378px;font-size:24px;line-height:24px;font-weight:400;color:#000;letter-spacing:-1.3px;">7.125,00</div>
<div style="position:absolute;left:2172px;top:372px;width:54px;height:40px;box-sizing:border-box;border-right:2px solid #595959;border-bottom:2px solid #595959;"></div>
<div class="t" style="left:1698px;width:1000px;text-align:center;top:381px;font-size:22px;line-height:22px;font-weight:700;color:#000;letter-spacing:0px;">%</div>
<div class="t" style="left:660px;width:1000px;text-align:right;top:434px;font-size:24px;line-height:24px;font-weight:400;color:#000;letter-spacing:-1.3px;">Restwert</div>
<div style="position:absolute;left:1682px;top:426px;width:488px;height:42px;box-sizing:border-box;border:2px solid #eceef2;"></div>
<div style="position:absolute;left:1684px;top:428px;width:484px;height:38px;box-sizing:border-box;border:2px solid #cdd0d6;background:#fff;"></div>
<div style="position:absolute;left:2138px;top:430px;width:28px;height:34px;box-sizing:border-box;border-left:2px solid #cdd0d6;background:linear-gradient(#fbfbfc,#eef0f3);"></div>
<svg style="position:absolute;left:2148px;top:444px" width="10" height="6"><path d="M0 0h10v2h-2v2h-2v2h-2v-2h-2v-2h-2z" fill="#606060"/></svg>
<div style="position:absolute;left:1680px;top:468px;width:154px;height:42px;box-sizing:border-box;border:2px solid #eceef2;"></div>
<div style="position:absolute;left:1682px;top:470px;width:150px;height:38px;box-sizing:border-box;border:2px solid #9d9d9d;background:#fff;"></div>
<div class="t" style="left:827px;width:1000px;text-align:right;top:476px;font-size:24px;line-height:24px;font-weight:400;color:#000;letter-spacing:-1.3px;">672,27</div>
<div style="position:absolute;left:1836px;top:468px;width:154px;height:42px;box-sizing:border-box;border:2px solid #eceef2;"></div>
<div style="position:absolute;left:1838px;top:470px;width:150px;height:38px;box-sizing:border-box;border:2px solid #9d9d9d;background:#fff;"></div>
<div class="t" style="left:983px;width:1000px;text-align:right;top:476px;font-size:24px;line-height:24px;font-weight:400;color:#000;letter-spacing:-1.3px;">127,73</div>
<div style="position:absolute;left:1992px;top:468px;width:178px;height:42px;box-sizing:border-box;border:2px solid #eceef2;"></div>
<div style="position:absolute;left:1994px;top:470px;width:174px;height:38px;box-sizing:border-box;border:2px solid #9d9d9d;background:#fff;"></div>
<div class="t" style="left:1163px;width:1000px;text-align:right;top:476px;font-size:24px;line-height:24px;font-weight:400;color:#000;letter-spacing:-1.3px;">800,00</div>
<div class="t" style="left:660px;width:1000px;text-align:right;top:532px;font-size:24px;line-height:24px;font-weight:400;color:#000;letter-spacing:-1.3px;">Umbaukosten</div>
<div style="position:absolute;left:1680px;top:524px;width:154px;height:42px;box-sizing:border-box;border:2px solid #eceef2;"></div>
<div style="position:absolute;left:1682px;top:526px;width:150px;height:38px;box-sizing:border-box;border:2px solid #9d9d9d;background:#fff;"></div>
<div style="position:absolute;left:1836px;top:524px;width:154px;height:42px;box-sizing:border-box;border:2px solid #eceef2;"></div>
<div style="position:absolute;left:1838px;top:526px;width:150px;height:38px;box-sizing:border-box;border:2px solid #9d9d9d;background:#fff;"></div>
<div style="position:absolute;left:1992px;top:524px;width:178px;height:42px;box-sizing:border-box;border:2px solid #eceef2;"></div>
<div style="position:absolute;left:1994px;top:526px;width:174px;height:38px;box-sizing:border-box;border:2px solid #9d9d9d;background:#fff;"></div>
<div class="t" style="left:660px;width:1000px;text-align:right;top:574px;font-size:24px;line-height:24px;font-weight:400;color:#000;letter-spacing:-1.3px;">Entsorgungskosten</div>
<div style="position:absolute;left:1680px;top:566px;width:154px;height:42px;box-sizing:border-box;border:2px solid #eceef2;"></div>
<div style="position:absolute;left:1682px;top:568px;width:150px;height:38px;box-sizing:border-box;border:2px solid #9d9d9d;background:#fff;"></div>
<div style="position:absolute;left:1836px;top:566px;width:154px;height:42px;box-sizing:border-box;border:2px solid #eceef2;"></div>
<div style="position:absolute;left:1838px;top:568px;width:150px;height:38px;box-sizing:border-box;border:2px solid #9d9d9d;background:#fff;"></div>
<div style="position:absolute;left:1992px;top:566px;width:178px;height:42px;box-sizing:border-box;border:2px solid #eceef2;"></div>
<div style="position:absolute;left:1994px;top:568px;width:174px;height:38px;box-sizing:border-box;border:2px solid #9d9d9d;background:#fff;"></div>
<div class="t" style="left:660px;width:1000px;text-align:right;top:630px;font-size:24px;line-height:24px;font-weight:400;color:#000;letter-spacing:-1.3px;">Händlereinkaufswert</div>
<div style="position:absolute;left:1680px;top:622px;width:154px;height:42px;box-sizing:border-box;border:2px solid #eceef2;"></div>
<div style="position:absolute;left:1682px;top:624px;width:150px;height:38px;box-sizing:border-box;border:2px solid #9d9d9d;background:#fff;"></div>
<div class="t" style="left:827px;width:1000px;text-align:right;top:630px;font-size:24px;line-height:24px;font-weight:400;color:#000;letter-spacing:-1.3px;">4.894,96</div>
<div style="position:absolute;left:1836px;top:622px;width:154px;height:42px;box-sizing:border-box;border:2px solid #eceef2;"></div>
<div style="position:absolute;left:1838px;top:624px;width:150px;height:38px;box-sizing:border-box;border:2px solid #9d9d9d;background:#fff;"></div>
<div class="t" style="left:983px;width:1000px;text-align:right;top:630px;font-size:24px;line-height:24px;font-weight:400;color:#000;letter-spacing:-1.3px;">930,04</div>
<div style="position:absolute;left:1992px;top:622px;width:178px;height:42px;box-sizing:border-box;border:2px solid #eceef2;"></div>
<div style="position:absolute;left:1994px;top:624px;width:174px;height:38px;box-sizing:border-box;border:2px solid #9d9d9d;background:#fff;"></div>
<div class="t" style="left:1163px;width:1000px;text-align:right;top:630px;font-size:24px;line-height:24px;font-weight:400;color:#000;letter-spacing:-1.3px;">5.825,00</div>
<div class="t" style="left:660px;width:1000px;text-align:right;top:672px;font-size:24px;line-height:24px;font-weight:400;color:#000;letter-spacing:-1.3px;">Händlerverkaufswert</div>
<div style="position:absolute;left:1680px;top:664px;width:154px;height:42px;box-sizing:border-box;border:2px solid #eceef2;"></div>
<div style="position:absolute;left:1682px;top:666px;width:150px;height:38px;box-sizing:border-box;border:2px solid #9d9d9d;background:#fff;"></div>
<div class="t" style="left:827px;width:1000px;text-align:right;top:672px;font-size:24px;line-height:24px;font-weight:400;color:#000;letter-spacing:-1.3px;">5.987,39</div>
<div style="position:absolute;left:1836px;top:664px;width:154px;height:42px;box-sizing:border-box;border:2px solid #eceef2;"></div>
<div style="position:absolute;left:1838px;top:666px;width:150px;height:38px;box-sizing:border-box;border:2px solid #9d9d9d;background:#fff;"></div>
<div class="t" style="left:983px;width:1000px;text-align:right;top:672px;font-size:24px;line-height:24px;font-weight:400;color:#000;letter-spacing:-1.3px;">1.137,61</div>
<div style="position:absolute;left:1992px;top:664px;width:178px;height:42px;box-sizing:border-box;border:2px solid #eceef2;"></div>
<div style="position:absolute;left:1994px;top:666px;width:174px;height:38px;box-sizing:border-box;border:2px solid #9d9d9d;background:#fff;"></div>
<div class="t" style="left:1163px;width:1000px;text-align:right;top:672px;font-size:24px;line-height:24px;font-weight:400;color:#000;letter-spacing:-1.3px;">7.125,00</div>
<div class="t" style="left:660px;width:1000px;text-align:right;top:714px;font-size:24px;line-height:24px;font-weight:400;color:#000;letter-spacing:-1.3px;">Neupreis</div>
<div style="position:absolute;left:1680px;top:706px;width:154px;height:42px;box-sizing:border-box;border:2px solid #eceef2;"></div>
<div style="position:absolute;left:1682px;top:708px;width:150px;height:38px;box-sizing:border-box;border:2px solid #9d9d9d;background:#fff;"></div>
<div class="t" style="left:827px;width:1000px;text-align:right;top:714px;font-size:24px;line-height:24px;font-weight:400;color:#000;letter-spacing:-1.3px;">18.848,78</div>
<div style="position:absolute;left:1836px;top:706px;width:154px;height:42px;box-sizing:border-box;border:2px solid #eceef2;"></div>
<div style="position:absolute;left:1838px;top:708px;width:150px;height:38px;box-sizing:border-box;border:2px solid #9d9d9d;background:#fff;"></div>
<div class="t" style="left:983px;width:1000px;text-align:right;top:714px;font-size:24px;line-height:24px;font-weight:400;color:#000;letter-spacing:-1.3px;">3.581,27</div>
<div style="position:absolute;left:1992px;top:706px;width:178px;height:42px;box-sizing:border-box;border:2px solid #eceef2;"></div>
<div style="position:absolute;left:1994px;top:708px;width:174px;height:38px;box-sizing:border-box;border:2px solid #9d9d9d;background:#fff;"></div>
<div class="t" style="left:1163px;width:1000px;text-align:right;top:714px;font-size:24px;line-height:24px;font-weight:400;color:#000;letter-spacing:-1.3px;">22.430,05</div>
<div class="t" style="left:660px;width:1000px;text-align:right;top:770px;font-size:24px;line-height:24px;font-weight:400;color:#000;letter-spacing:-1.3px;">Nutzungsausfall (Gruppe/Betrag)</div>
<div style="position:absolute;left:1682px;top:762px;width:152px;height:42px;box-sizing:border-box;border:2px solid #eceef2;"></div>
<div style="position:absolute;left:1684px;top:764px;width:148px;height:38px;box-sizing:border-box;border:2px solid #cdd0d6;background:#fff;"></div>
<div style="position:absolute;left:1802px;top:766px;width:28px;height:34px;box-sizing:border-box;border-left:2px solid #cdd0d6;background:linear-gradient(#fbfbfc,#eef0f3);"></div>
<svg style="position:absolute;left:1812px;top:780px" width="10" height="6"><path d="M0 0h10v2h-2v2h-2v2h-2v-2h-2v-2h-2z" fill="#606060"/></svg>
<div style="position:absolute;left:1836px;top:762px;width:154px;height:42px;box-sizing:border-box;border:2px solid #eceef2;"></div>
<div style="position:absolute;left:1838px;top:764px;width:150px;height:38px;box-sizing:border-box;border:2px solid #9d9d9d;background:#fff;"></div>
<div style="position:absolute;left:1990px;top:762px;width:180px;height:42px;box-sizing:border-box;border:2px solid #eceef2;"></div>
<div style="position:absolute;left:1992px;top:764px;width:176px;height:38px;box-sizing:border-box;border:2px solid #cdd0d6;background:#fff;"></div>
<div style="position:absolute;left:2138px;top:766px;width:28px;height:34px;box-sizing:border-box;border-left:2px solid #cdd0d6;background:linear-gradient(#fbfbfc,#eef0f3);"></div>
<svg style="position:absolute;left:2148px;top:780px" width="10" height="6"><path d="M0 0h10v2h-2v2h-2v2h-2v-2h-2v-2h-2z" fill="#606060"/></svg>
<div class="t" style="left:660px;width:1000px;text-align:right;top:812px;font-size:24px;line-height:24px;font-weight:400;color:#000;letter-spacing:-1.3px;">Mietwagen (Gruppe/Betrag)</div>
<div style="position:absolute;left:1682px;top:804px;width:152px;height:42px;box-sizing:border-box;border:2px solid #eceef2;"></div>
<div style="position:absolute;left:1684px;top:806px;width:148px;height:38px;box-sizing:border-box;border:2px solid #cdd0d6;background:#fff;"></div>
<div style="position:absolute;left:1802px;top:808px;width:28px;height:34px;box-sizing:border-box;border-left:2px solid #cdd0d6;background:linear-gradient(#fbfbfc,#eef0f3);"></div>
<svg style="position:absolute;left:1812px;top:822px" width="10" height="6"><path d="M0 0h10v2h-2v2h-2v2h-2v-2h-2v-2h-2z" fill="#606060"/></svg>
<div style="position:absolute;left:1836px;top:804px;width:154px;height:42px;box-sizing:border-box;border:2px solid #eceef2;"></div>
<div style="position:absolute;left:1838px;top:806px;width:150px;height:38px;box-sizing:border-box;border:2px solid #9d9d9d;background:#fff;"></div>
<div style="position:absolute;left:1990px;top:804px;width:180px;height:42px;box-sizing:border-box;border:2px solid #eceef2;"></div>
<div style="position:absolute;left:1992px;top:806px;width:176px;height:38px;box-sizing:border-box;border:2px solid #cdd0d6;background:#fff;"></div>
<div style="position:absolute;left:2138px;top:808px;width:28px;height:34px;box-sizing:border-box;border-left:2px solid #cdd0d6;background:linear-gradient(#fbfbfc,#eef0f3);"></div>
<svg style="position:absolute;left:2148px;top:822px" width="10" height="6"><path d="M0 0h10v2h-2v2h-2v2h-2v-2h-2v-2h-2z" fill="#606060"/></svg>
<div class="t" style="left:660px;width:1000px;text-align:right;top:910px;font-size:24px;line-height:24px;font-weight:400;color:#000;letter-spacing:-1.3px;">Fahrzeugschaden I</div>
<div style="position:absolute;left:1680px;top:902px;width:154px;height:42px;box-sizing:border-box;border:2px solid #eceef2;"></div>
<div style="position:absolute;left:1682px;top:904px;width:150px;height:38px;box-sizing:border-box;border:2px solid #9d9d9d;background:#fff;"></div>
<div style="position:absolute;left:1840px;top:902px;width:150px;height:40px;box-sizing:border-box;border-right:2px solid #595959;border-bottom:2px solid #595959;"></div>
<div class="t" style="left:1414px;width:1000px;text-align:center;top:910px;font-size:24px;line-height:24px;font-weight:700;color:#000;letter-spacing:2px;">I</div>
<div class="t" style="left:660px;width:1000px;text-align:right;top:952px;font-size:24px;line-height:24px;font-weight:400;color:#000;letter-spacing:-1.3px;">Fahrzeugschaden II</div>
<div style="position:absolute;left:1680px;top:944px;width:154px;height:42px;box-sizing:border-box;border:2px solid #eceef2;"></div>
<div style="position:absolute;left:1682px;top:946px;width:150px;height:38px;box-sizing:border-box;border:2px solid #9d9d9d;background:#fff;"></div>
<div style="position:absolute;left:1840px;top:944px;width:150px;height:40px;box-sizing:border-box;border-right:2px solid #595959;border-bottom:2px solid #595959;"></div>
<div class="t" style="left:1414px;width:1000px;text-align:center;top:953px;font-size:24px;line-height:24px;font-weight:700;color:#000;letter-spacing:2px;">II</div>
<div class="t" style="left:660px;width:1000px;text-align:right;top:1050px;font-size:24px;line-height:24px;font-weight:400;color:#000;letter-spacing:-1.3px;">Hinweis</div>
<div style="position:absolute;left:1678px;top:1042px;width:492px;height:42px;box-sizing:border-box;border:2px solid #eceef2;"></div>
<div style="position:absolute;left:1680px;top:1044px;width:488px;height:38px;box-sizing:border-box;border:2px solid #cdd0d6;background:#fff;"></div>
<div style="position:absolute;left:2138px;top:1046px;width:28px;height:34px;box-sizing:border-box;border-left:2px solid #cdd0d6;background:linear-gradient(#fbfbfc,#eef0f3);"></div>
<svg style="position:absolute;left:2148px;top:1060px" width="10" height="6"><path d="M0 0h10v2h-2v2h-2v2h-2v-2h-2v-2h-2z" fill="#606060"/></svg>
<div class="t" style="left:1686px;top:1050px;font-size:24px;line-height:24px;font-weight:400;color:#000;letter-spacing:-1.3px;">Reparaturauftrag liegt vor</div>
<div class="t" style="left:660px;width:1000px;text-align:right;top:1092px;font-size:24px;line-height:24px;font-weight:400;color:#000;letter-spacing:-1.3px;">Reparaturdauer in Arbeitstagen</div>
<div style="position:absolute;left:1678px;top:1084px;width:84px;height:42px;box-sizing:border-box;border:2px solid #eceef2;"></div>
<div style="position:absolute;left:1680px;top:1086px;width:80px;height:38px;box-sizing:border-box;border:2px solid #9d9d9d;background:#fff;"></div>
<div class="t" style="left:755px;width:1000px;text-align:right;top:1092px;font-size:24px;line-height:24px;font-weight:400;color:#000;letter-spacing:-1.3px;">5</div>
<div class="t" style="left:1784px;top:1092px;font-size:24px;line-height:24px;font-weight:400;color:#000;letter-spacing:0px;">-</div>
<div style="position:absolute;left:1794px;top:1084px;width:84px;height:42px;box-sizing:border-box;border:2px solid #eceef2;"></div>
<div style="position:absolute;left:1796px;top:1086px;width:80px;height:38px;box-sizing:border-box;border:2px solid #9d9d9d;background:#fff;"></div>
<div class="t" style="left:660px;width:1000px;text-align:right;top:1134px;font-size:24px;line-height:24px;font-weight:400;color:#000;letter-spacing:-1.3px;">Wiederbeschaffungsdauer in Kalendertagen</div>
<div style="position:absolute;left:1678px;top:1126px;width:84px;height:42px;box-sizing:border-box;border:2px solid #eceef2;"></div>
<div style="position:absolute;left:1680px;top:1128px;width:80px;height:38px;box-sizing:border-box;border:2px solid #9d9d9d;background:#fff;"></div>
<div class="t" style="left:1784px;top:1134px;font-size:24px;line-height:24px;font-weight:400;color:#000;letter-spacing:0px;">-</div>
<div style="position:absolute;left:1794px;top:1126px;width:84px;height:42px;box-sizing:border-box;border:2px solid #eceef2;"></div>
<div style="position:absolute;left:1796px;top:1128px;width:80px;height:38px;box-sizing:border-box;border:2px solid #9d9d9d;background:#fff;"></div>
<div class="t" style="left:660px;width:1000px;text-align:right;top:1190px;font-size:24px;line-height:24px;font-weight:400;color:#000;letter-spacing:-1.3px;">Verkehrssicherheit</div>
<div style="position:absolute;left:1678px;top:1182px;width:492px;height:42px;box-sizing:border-box;border:2px solid #eceef2;"></div>
<div style="position:absolute;left:1680px;top:1184px;width:488px;height:38px;box-sizing:border-box;border:2px solid #cdd0d6;background:#fff;"></div>
<div style="position:absolute;left:2138px;top:1186px;width:28px;height:34px;box-sizing:border-box;border-left:2px solid #cdd0d6;background:linear-gradient(#fbfbfc,#eef0f3);"></div>
<svg style="position:absolute;left:2148px;top:1200px" width="10" height="6"><path d="M0 0h10v2h-2v2h-2v2h-2v-2h-2v-2h-2z" fill="#606060"/></svg>
<div class="t" style="left:1684px;top:1190px;font-size:24px;line-height:24px;font-weight:700;color:#000;letter-spacing:0px;">nicht gegeben</div>
<div class="t" style="left:660px;width:1000px;text-align:right;top:1232px;font-size:24px;line-height:24px;font-weight:400;color:#000;letter-spacing:-1.3px;">Beurteilung</div>
<div style="position:absolute;left:1678px;top:1224px;width:492px;height:42px;box-sizing:border-box;border:2px solid #eceef2;"></div>
<div style="position:absolute;left:1680px;top:1226px;width:488px;height:38px;box-sizing:border-box;border:2px solid #cdd0d6;background:#fff;"></div>
<div style="position:absolute;left:2138px;top:1228px;width:28px;height:34px;box-sizing:border-box;border-left:2px solid #cdd0d6;background:linear-gradient(#fbfbfc,#eef0f3);"></div>
<svg style="position:absolute;left:2148px;top:1242px" width="10" height="6"><path d="M0 0h10v2h-2v2h-2v2h-2v-2h-2v-2h-2z" fill="#606060"/></svg>
<div class="t" style="left:1684px;top:1232px;font-size:24px;line-height:24px;font-weight:700;color:#000;letter-spacing:0px;">Reparaturschaden</div>
<svg style="position:absolute;left:4px;top:11px;overflow:visible" width="40" height="34" viewBox="0 0 40 34"><defs><linearGradient id="pgt" x1="0" y1="0" x2="1" y2="1"><stop offset="0" stop-color="#f4805a"/><stop offset="0.45" stop-color="#e8201c"/><stop offset="1" stop-color="#c00818"/></linearGradient><filter id="pst" x="-50%" y="-50%" width="200%" height="200%"><feGaussianBlur stdDeviation="2"/></filter></defs><g transform="scale(0.6)"><path d="M10 1H17L19 3H25L30 6V9H33V16L30 19V23H27V26H22V23H14V24H10V18H2L0 16V9L4 5H8Z" fill="#000" opacity="0.28" transform="translate(2,4)" filter="url(#pst)"/><path d="M10 1H17L19 3H25L30 6V9H33V16L30 19V23H27V26H22V23H14V24H10V18H2L0 16V9L4 5H8Z" fill="url(#pgt)"/><path d="M2 11H10V17H2Z" fill="#b80c18" opacity="0.8"/><rect x="6" y="6" width="2" height="2" fill="#701010"/></g></svg>
<svg style="position:absolute;left:16px;top:320px;overflow:visible" width="40" height="34" viewBox="0 0 40 34"><defs><linearGradient id="pgn0" x1="0" y1="0" x2="1" y2="1"><stop offset="0" stop-color="#f4805a"/><stop offset="0.45" stop-color="#e8201c"/><stop offset="1" stop-color="#c00818"/></linearGradient><filter id="psn0" x="-50%" y="-50%" width="200%" height="200%"><feGaussianBlur stdDeviation="2"/></filter></defs><g transform="scale(1.0)"><path d="M10 1H17L19 3H25L30 6V9H33V16L30 19V23H27V26H22V23H14V24H10V18H2L0 16V9L4 5H8Z" fill="#000" opacity="0.28" transform="translate(2,4)" filter="url(#psn0)"/><path d="M10 1H17L19 3H25L30 6V9H33V16L30 19V23H27V26H22V23H14V24H10V18H2L0 16V9L4 5H8Z" fill="url(#pgn0)"/><path d="M2 11H10V17H2Z" fill="#b80c18" opacity="0.8"/><rect x="6" y="6" width="2" height="2" fill="#701010"/></g></svg>
<svg style="position:absolute;left:22px;top:390px;overflow:visible" width="40" height="34" viewBox="0 0 40 34"><defs><linearGradient id="pgn1" x1="0" y1="0" x2="1" y2="1"><stop offset="0" stop-color="#f4805a"/><stop offset="0.45" stop-color="#e8201c"/><stop offset="1" stop-color="#c00818"/></linearGradient><filter id="psn1" x="-50%" y="-50%" width="200%" height="200%"><feGaussianBlur stdDeviation="2"/></filter></defs><g transform="scale(1.0)"><path d="M10 1H17L19 3H25L30 6V9H33V16L30 19V23H27V26H22V23H14V24H10V18H2L0 16V9L4 5H8Z" fill="#000" opacity="0.28" transform="translate(2,4)" filter="url(#psn1)"/><path d="M10 1H17L19 3H25L30 6V9H33V16L30 19V23H27V26H22V23H14V24H10V18H2L0 16V9L4 5H8Z" fill="url(#pgn1)"/><path d="M2 11H10V17H2Z" fill="#b80c18" opacity="0.8"/><rect x="6" y="6" width="2" height="2" fill="#701010"/></g></svg>
<svg style="position:absolute;left:6px;top:440px;overflow:visible" width="60" height="60" viewBox="0 0 60 60"><defs><linearGradient id="cgn2" x1="0" y1="0" x2="1" y2="1"><stop offset="0" stop-color="#b4dc28"/><stop offset="1" stop-color="#5c9818"/></linearGradient><filter id="csn2" x="-50%" y="-50%" width="200%" height="200%"><feGaussianBlur stdDeviation="2.5"/></filter></defs><g transform="scale(1.0)"><path d="M21 36.5L30.5 47.5L48 23" fill="none" stroke="#000" stroke-opacity="0.5" stroke-width="6" stroke-linecap="round" stroke-linejoin="round" transform="translate(-4,3)" filter="url(#csn2)"/><path d="M21 36.5L30.5 47.5L48 23" fill="none" stroke="url(#cgn2)" stroke-width="5.5" stroke-linecap="round" stroke-linejoin="round"/></g></svg>
<svg style="position:absolute;left:6px;top:510px;overflow:visible" width="60" height="60" viewBox="0 0 60 60"><defs><linearGradient id="cgn3" x1="0" y1="0" x2="1" y2="1"><stop offset="0" stop-color="#b4dc28"/><stop offset="1" stop-color="#5c9818"/></linearGradient><filter id="csn3" x="-50%" y="-50%" width="200%" height="200%"><feGaussianBlur stdDeviation="2.5"/></filter></defs><g transform="scale(1.0)"><path d="M21 36.5L30.5 47.5L48 23" fill="none" stroke="#000" stroke-opacity="0.5" stroke-width="6" stroke-linecap="round" stroke-linejoin="round" transform="translate(-4,3)" filter="url(#csn3)"/><path d="M21 36.5L30.5 47.5L48 23" fill="none" stroke="url(#cgn3)" stroke-width="5.5" stroke-linecap="round" stroke-linejoin="round"/></g></svg>
<svg style="position:absolute;left:6px;top:580px;overflow:visible" width="60" height="60" viewBox="0 0 60 60"><defs><linearGradient id="cgn4" x1="0" y1="0" x2="1" y2="1"><stop offset="0" stop-color="#b4dc28"/><stop offset="1" stop-color="#5c9818"/></linearGradient><filter id="csn4" x="-50%" y="-50%" width="200%" height="200%"><feGaussianBlur stdDeviation="2.5"/></filter></defs><g transform="scale(1.0)"><path d="M21 36.5L30.5 47.5L48 23" fill="none" stroke="#000" stroke-opacity="0.5" stroke-width="6" stroke-linecap="round" stroke-linejoin="round" transform="translate(-4,3)" filter="url(#csn4)"/><path d="M21 36.5L30.5 47.5L48 23" fill="none" stroke="url(#cgn4)" stroke-width="5.5" stroke-linecap="round" stroke-linejoin="round"/></g></svg>
<svg style="position:absolute;left:6px;top:650px;overflow:visible" width="60" height="60" viewBox="0 0 60 60"><defs><linearGradient id="cgn5" x1="0" y1="0" x2="1" y2="1"><stop offset="0" stop-color="#60b8f0"/><stop offset="1" stop-color="#2a88c8"/></linearGradient><filter id="csn5" x="-50%" y="-50%" width="200%" height="200%"><feGaussianBlur stdDeviation="2.5"/></filter></defs><g transform="scale(1.0)"><path d="M21 36.5L30.5 47.5L48 23" fill="none" stroke="#000" stroke-opacity="0.35" stroke-width="6" stroke-linecap="round" stroke-linejoin="round" transform="translate(-4,3)" filter="url(#csn5)"/><path d="M21 36.5L30.5 47.5L48 23" fill="none" stroke="url(#cgn5)" stroke-width="5.5" stroke-linecap="round" stroke-linejoin="round"/></g></svg>
<svg style="position:absolute;left:6px;top:1072px;overflow:visible" width="60" height="60" viewBox="0 0 60 60"><defs><linearGradient id="cgn11" x1="0" y1="0" x2="1" y2="1"><stop offset="0" stop-color="#b4dc28"/><stop offset="1" stop-color="#5c9818"/></linearGradient><filter id="csn11" x="-50%" y="-50%" width="200%" height="200%"><feGaussianBlur stdDeviation="2.5"/></filter></defs><g transform="scale(1.0)"><path d="M21 36.5L30.5 47.5L48 23" fill="none" stroke="#000" stroke-opacity="0.5" stroke-width="6" stroke-linecap="round" stroke-linejoin="round" transform="translate(-4,3)" filter="url(#csn11)"/><path d="M21 36.5L30.5 47.5L48 23" fill="none" stroke="url(#cgn11)" stroke-width="5.5" stroke-linecap="round" stroke-linejoin="round"/></g></svg>
<svg style="position:absolute;left:22px;top:1162px;overflow:visible" width="40" height="34" viewBox="0 0 40 34"><defs><linearGradient id="pgn12" x1="0" y1="0" x2="1" y2="1"><stop offset="0" stop-color="#f4805a"/><stop offset="0.45" stop-color="#e8201c"/><stop offset="1" stop-color="#c00818"/></linearGradient><filter id="psn12" x="-50%" y="-50%" width="200%" height="200%"><feGaussianBlur stdDeviation="2"/></filter></defs><g transform="scale(1.0)"><path d="M10 1H17L19 3H25L30 6V9H33V16L30 19V23H27V26H22V23H14V24H10V18H2L0 16V9L4 5H8Z" fill="#000" opacity="0.28" transform="translate(2,4)" filter="url(#psn12)"/><path d="M10 1H17L19 3H25L30 6V9H33V16L30 19V23H27V26H22V23H14V24H10V18H2L0 16V9L4 5H8Z" fill="url(#pgn12)"/><path d="M2 11H10V17H2Z" fill="#b80c18" opacity="0.8"/><rect x="6" y="6" width="2" height="2" fill="#701010"/></g></svg>
<svg style="position:absolute;left:22px;top:1232px;overflow:visible" width="40" height="34" viewBox="0 0 40 34"><defs><linearGradient id="pgn13" x1="0" y1="0" x2="1" y2="1"><stop offset="0" stop-color="#f4805a"/><stop offset="0.45" stop-color="#e8201c"/><stop offset="1" stop-color="#c00818"/></linearGradient><filter id="psn13" x="-50%" y="-50%" width="200%" height="200%"><feGaussianBlur stdDeviation="2"/></filter></defs><g transform="scale(1.0)"><path d="M10 1H17L19 3H25L30 6V9H33V16L30 19V23H27V26H22V23H14V24H10V18H2L0 16V9L4 5H8Z" fill="#000" opacity="0.28" transform="translate(2,4)" filter="url(#psn13)"/><path d="M10 1H17L19 3H25L30 6V9H33V16L30 19V23H27V26H22V23H14V24H10V18H2L0 16V9L4 5H8Z" fill="url(#pgn13)"/><path d="M2 11H10V17H2Z" fill="#b80c18" opacity="0.8"/><rect x="6" y="6" width="2" height="2" fill="#701010"/></g></svg>
<svg style="position:absolute;left:306px;top:108px;overflow:visible" width="86" height="92" viewBox="0 0 86 92"><defs><linearGradient id="ga1" x1="0" y1="0" x2="1" y2="0.3"><stop offset="0" stop-color="#b0dc10"/><stop offset="1" stop-color="#4a8c10"/></linearGradient></defs><path d="M14 45.5L45 20V34H74V58H45V72Z" fill="url(#ga1)"/><path d="M14 45.5L45 20V34H74V46H14Z" fill="#fff" opacity="0.18"/></svg>
<svg style="position:absolute;left:402px;top:108px;overflow:visible" width="86" height="92" viewBox="0 0 86 92"><defs><linearGradient id="ga2" x1="0" y1="0" x2="1" y2="0.6"><stop offset="0" stop-color="#a8d820"/><stop offset="1" stop-color="#4a8c10"/></linearGradient></defs><path d="M74 45.5L43 20V34H14V58H43V72Z" fill="url(#ga2)"/><path d="M74 45.5L43 20V34H14V46H74Z" fill="#fff" opacity="0.18"/></svg>
<svg style="position:absolute;left:498px;top:108px;overflow:visible" width="86" height="92" viewBox="0 0 86 92"><defs><linearGradient id="gf" x1="0" y1="0" x2="1" y2="1"><stop offset="0" stop-color="#505050"/><stop offset="1" stop-color="#2c2c2c"/></linearGradient><linearGradient id="gfg" x1="0" y1="0" x2="1" y2="0"><stop offset="0" stop-color="#5a9010"/><stop offset="0.5" stop-color="#b8e020"/><stop offset="1" stop-color="#5a9010"/></linearGradient></defs><path d="M16 18H67L72 23V74H16Z" fill="url(#gf)"/><rect x="20" y="20" width="3" height="17" fill="#777"/><rect x="32" y="20" width="26" height="18" fill="#d8d8d8"/><rect x="32" y="35" width="26" height="3" fill="#fff"/><rect x="48" y="22" width="6" height="10" fill="#555"/><rect x="22" y="46" width="44" height="25" fill="#f6f6f6"/><g fill="#cfcfcf"><rect x="27" y="50" width="34" height="2"/><rect x="27" y="54" width="34" height="2"/><rect x="27" y="58" width="34" height="2"/><rect x="27" y="62" width="34" height="2"/><rect x="27" y="66" width="34" height="2"/></g><rect x="22" y="70" width="44" height="4" fill="url(#gfg)"/></svg>
<svg style="position:absolute;left:690px;top:108px;overflow:visible" width="86" height="92" viewBox="0 0 86 92"><defs><linearGradient id="gr" x1="0" y1="0" x2="1" y2="1"><stop offset="0" stop-color="#ff3030"/><stop offset="1" stop-color="#b00000"/></linearGradient></defs><rect x="8" y="52" width="8" height="4" fill="#333"/><rect x="68" y="52" width="8" height="4" fill="#333"/><path d="M18 56L24 40H46L50 56Z" fill="#dfe6ea"/><path d="M20 56L25 42H33L28 56Z" fill="#a8c8e0"/><rect x="28" y="48" width="8" height="5" fill="#405060"/><path d="M12 62L16 56H58L62 62Z" fill="#3a96d8"/><rect x="12" y="61" width="60" height="7" fill="#c8ccd0"/><rect x="14" y="63" width="4" height="3" fill="#e0a020"/><rect x="66" y="63" width="4" height="3" fill="#e0a020"/><rect x="12" y="67" width="60" height="14" fill="#303030"/><rect x="32" y="74" width="20" height="4" fill="#f0f0f0"/><rect x="12" y="80" width="10" height="6" fill="#111"/><rect x="62" y="80" width="10" height="6" fill="#111"/><path d="M49 6H72V33H84L60.5 62L38 33H49Z" fill="url(#gr)"/><text x="60" y="46" font-family="Liberation Sans" font-weight="bold" font-size="26" fill="#fff" text-anchor="middle">§</text></svg>
<svg style="position:absolute;left:978px;top:108px;overflow:visible" width="86" height="92" viewBox="0 0 86 92"><defs><linearGradient id="gg" x1="0" y1="0" x2="1" y2="1"><stop offset="0" stop-color="#f0f0f0"/><stop offset="1" stop-color="#bcbcbc"/></linearGradient><linearGradient id="gp" x1="0" y1="0" x2="1" y2="0"><stop offset="0" stop-color="#ffb040"/><stop offset="1" stop-color="#d87008"/></linearGradient><filter id="gs" x="-50%" y="-50%" width="200%" height="200%"><feGaussianBlur stdDeviation="2"/></filter></defs><polygon points="74.3,39.6 74.3,52.4 67.4,51.2 64.2,58.9 70.0,62.9 60.9,72.0 56.9,66.2 49.2,69.4 50.4,76.3 37.6,76.3 38.8,69.4 31.1,66.2 27.1,72.0 18.0,62.9 23.8,58.9 20.6,51.2 13.7,52.4 13.7,39.6 20.6,40.8 23.8,33.1 18.0,29.1 27.1,20.0 31.1,25.8 38.8,22.6 37.6,15.7 50.4,15.7 49.2,22.6 56.9,25.8 60.9,20.0 70.0,29.1 64.2,33.1 67.4,40.8" fill="#000" opacity="0.3" transform="translate(2,3)" filter="url(#gs)"/><polygon points="74.3,39.6 74.3,52.4 67.4,51.2 64.2,58.9 70.0,62.9 60.9,72.0 56.9,66.2 49.2,69.4 50.4,76.3 37.6,76.3 38.8,69.4 31.1,66.2 27.1,72.0 18.0,62.9 23.8,58.9 20.6,51.2 13.7,52.4 13.7,39.6 20.6,40.8 23.8,33.1 18.0,29.1 27.1,20.0 31.1,25.8 38.8,22.6 37.6,15.7 50.4,15.7 49.2,22.6 56.9,25.8 60.9,20.0 70.0,29.1 64.2,33.1 67.4,40.8" fill="url(#gg)" stroke="#9a9a9a" stroke-width="1.5"/><circle cx="44" cy="46" r="15" fill="none" stroke="#f4f4f4" stroke-width="6"/><circle cx="44" cy="46" r="10" fill="#8a8a8a"/><circle cx="44" cy="46" r="6" fill="#b8b8b8"/><g transform="translate(74.6,10.6) rotate(30.4)"><path d="M-7 30H9L2 76Z" fill="#000" opacity="0.35" filter="url(#gs)"/><path d="M-7 8V4Q-7 -1 0 -1Q7 -1 7 4V8Z" fill="#d84a4a"/><rect x="-7" y="8" width="14" height="6" fill="#7c7c7c"/><rect x="-7" y="14" width="14" height="36" fill="url(#gp)"/><path d="M-7 50H7L0 66Z" fill="#dcbc94"/><path d="M-2.2 61H2.2L0 66Z" fill="#1a1a1a"/></g></svg>
<svg style="position:absolute;left:1170px;top:108px;overflow:visible" width="86" height="92" viewBox="0 0 86 92"><defs></defs><path d="M4 45.6L24 25L44 45.6L24 66.4Z" fill="#2c3ca8"/><path d="M29.7 20.5H58L81.2 45.6L58 70.6H29.7L53.7 45.6Z" fill="#2c3ca8"/></svg>
<svg style="position:absolute;left:1266px;top:108px;overflow:visible" width="86" height="92" viewBox="0 0 86 92"><defs></defs><rect x="18" y="5.5" width="48" height="50" fill="#f8d800"/><rect x="18" y="55.5" width="48" height="30.5" fill="#083a78"/><text transform="translate(38.4,49.8) rotate(-90)" font-family="Liberation Sans" font-weight="bold" font-size="25" fill="#083a78" textLength="40" lengthAdjust="spacingAndGlyphs">DAT</text><path d="M44 49V27H50V36M48 25V29M53 49V33M55 36V12H59V34M59 14H62V36M62 24H64V44M52 44L49 49M56 44L54 49M60 44L58 48" fill="none" stroke="#6e6a10" stroke-width="1.8"/><path d="M42 29H50V35H42Z" fill="#b8a820" opacity="0.6"/><path d="M33 59H51M30 62H54M30 66H54M26 66L24 70V81H60V70L58 66M26 70H58M28 74H33V78H28ZM51 74H56V78H51ZM37 76H47V79H37Z" fill="none" stroke="#a8a860" stroke-width="1.6"/></svg>
<svg style="position:absolute;left:1362px;top:108px;overflow:visible" width="86" height="92" viewBox="0 0 86 92"><defs></defs><path d="M12 52V16H72V46" fill="none" stroke="#000" stroke-width="4"/><path d="M42 22L20 44H64Z" fill="none" stroke="#000" stroke-width="4" stroke-linejoin="miter"/><rect x="40.5" y="28" width="3" height="9" fill="#000"/><rect x="40.5" y="38.5" width="3" height="2" fill="#000"/><path d="M12 70V60L24 50H70L74 56V70Z" fill="none" stroke="#000" stroke-width="2.5"/><path d="M12 62L24 50" stroke="#000" stroke-width="5"/><path d="M28 52L27 68M36 53H54L56 60L54 66H36L35 60Z M60 51L62 68M66 52L69 66" fill="none" stroke="#000" stroke-width="2"/><rect x="10" y="74" width="64" height="4" fill="#000"/></svg>
<svg style="position:absolute;left:1458px;top:108px;overflow:visible" width="86" height="92" viewBox="0 0 86 92"><defs><linearGradient id="gfm" x1="0" y1="0" x2="0" y2="1"><stop offset="0" stop-color="#d8d8d8"/><stop offset="0.5" stop-color="#fdfdfd"/><stop offset="1" stop-color="#ffffff"/></linearGradient><filter id="gps" x="-50%" y="-50%" width="200%" height="200%"><feGaussianBlur stdDeviation="2"/></filter></defs><rect x="5" y="15" width="70" height="24" rx="3" fill="url(#gfm)" stroke="#000" stroke-width="2"/><rect x="5" y="51" width="70" height="24" rx="3" fill="url(#gfm)" stroke="#000" stroke-width="2"/><rect x="16" y="20" width="2" height="14" fill="#000"/><rect x="16" y="56" width="2" height="14" fill="#000"/><path d="M55.7 24H69.4V38.2H84V52.3H69.4V66H55.7V52.3H40V38.2H55.7Z" fill="#000" opacity="0.45" transform="translate(-2,3)" filter="url(#gps)"/><path d="M55.7 24H69.4V38.2H84V52.3H69.4V66H55.7V52.3H40V38.2H55.7Z" fill="#9ac010"/></svg>
<svg style="position:absolute;left:1554px;top:108px;overflow:visible" width="86" height="92" viewBox="0 0 86 92"><defs><linearGradient id="gpb" x1="0" y1="0" x2="1" y2="0"><stop offset="0" stop-color="#e8e8e8"/><stop offset="0.2" stop-color="#a8a8ac"/><stop offset="0.8" stop-color="#a8a8ac"/><stop offset="1" stop-color="#e8e8e8"/></linearGradient><radialGradient id="gml" cx="0.5" cy="0.5" r="0.5"><stop offset="0" stop-color="#ffffff"/><stop offset="0.7" stop-color="#e8f8ff"/><stop offset="1" stop-color="#a8d8f8"/></radialGradient><filter id="gms" x="-50%" y="-50%" width="200%" height="200%"><feGaussianBlur stdDeviation="2"/></filter></defs><g transform="translate(12,8)"><rect x="0" y="8" width="4" height="14" fill="#555"/><rect x="40" y="8" width="4" height="14" fill="#555"/><rect x="5" y="0" width="34" height="23" fill="#f4f4f4" stroke="#c0c0c0" stroke-width="2"/><rect x="-10" y="22" width="64" height="28" rx="3" fill="url(#gpb)" stroke="#888" stroke-width="1"/><rect x="-6" y="26" width="56" height="6" fill="#b4b4c0"/><rect x="-6" y="32" width="56" height="5" fill="#80808c"/><rect x="2" y="37" width="40" height="6" fill="#202028"/><rect x="6" y="42" width="32" height="10" fill="#f8f8f8"/><rect x="-2" y="50" width="48" height="3" fill="#505058"/></g><path d="M60 68L80 88" stroke="#1a1a1a" stroke-width="7" stroke-linecap="round"/><circle cx="48" cy="55" r="15" fill="#000" opacity="0.3" transform="translate(1,3)" filter="url(#gms)"/><circle cx="48" cy="55" r="13" fill="url(#gml)" stroke="#707070" stroke-width="2.5"/></svg>
<svg style="position:absolute;left:1650px;top:108px;overflow:visible" width="86" height="92" viewBox="0 0 86 92"><defs><linearGradient id="gpb" x1="0" y1="0" x2="1" y2="0"><stop offset="0" stop-color="#e8e8e8"/><stop offset="0.2" stop-color="#a8a8ac"/><stop offset="0.8" stop-color="#a8a8ac"/><stop offset="1" stop-color="#e8e8e8"/></linearGradient></defs><g transform="translate(22,18)"><rect x="0" y="8" width="4" height="14" fill="#555"/><rect x="40" y="8" width="4" height="14" fill="#555"/><rect x="5" y="0" width="34" height="23" fill="#f4f4f4" stroke="#c0c0c0" stroke-width="2"/><rect x="-10" y="22" width="64" height="28" rx="3" fill="url(#gpb)" stroke="#888" stroke-width="1"/><rect x="-6" y="26" width="56" height="6" fill="#b4b4c0"/><rect x="-6" y="32" width="56" height="5" fill="#80808c"/><rect x="2" y="37" width="40" height="6" fill="#202028"/><rect x="6" y="42" width="32" height="10" fill="#f8f8f8"/><rect x="-2" y="50" width="48" height="3" fill="#505058"/></g></svg>
<svg style="position:absolute;left:1746px;top:108px;overflow:visible" width="86" height="92" viewBox="0 0 86 92"><defs><linearGradient id="gcg" x1="0" y1="0" x2="1" y2="1"><stop offset="0" stop-color="#b8e010"/><stop offset="1" stop-color="#5a9818"/></linearGradient><filter id="gcs" x="-50%" y="-50%" width="200%" height="200%"><feGaussianBlur stdDeviation="3"/></filter></defs><path d="M18 51L37 69L68 25" fill="none" stroke="#000" stroke-opacity="0.4" stroke-width="13" stroke-linecap="round" stroke-linejoin="round" transform="translate(3,5)" filter="url(#gcs)"/><path d="M18 51L37 69L68 25" fill="none" stroke="url(#gcg)" stroke-width="12" stroke-linecap="round" stroke-linejoin="round"/></svg>
<svg style="position:absolute;left:1938px;top:108px;overflow:visible" width="86" height="92" viewBox="0 0 86 92"><defs><linearGradient id="gp2" x1="0" y1="0" x2="1" y2="0"><stop offset="0" stop-color="#ffb040"/><stop offset="1" stop-color="#d87008"/></linearGradient><filter id="gs2" x="-50%" y="-50%" width="200%" height="200%"><feGaussianBlur stdDeviation="2"/></filter></defs><rect x="22" y="22" width="42" height="52" rx="3" fill="#f0f0f0" stroke="#b06830" stroke-width="4"/><rect x="31" y="17" width="24" height="10" fill="#fff" stroke="#777" stroke-width="2"/><rect x="32" y="20" width="22" height="2" fill="#333"/><g transform="translate(72,10.6) rotate(30.2)"><path d="M-7 30H9L2 76Z" fill="#000" opacity="0.35" filter="url(#gs2)"/><path d="M-7 8V4Q-7 -1 0 -1Q7 -1 7 4V8Z" fill="#d84a4a"/><rect x="-7" y="8" width="14" height="6" fill="#7c7c7c"/><rect x="-7" y="14" width="14" height="36" fill="url(#gp2)"/><path d="M-7 50H7L0 66Z" fill="#dcbc94"/><path d="M-2.2 61H2.2L0 66Z" fill="#1a1a1a"/></g></svg>
<svg style="position:absolute;left:2034px;top:108px;overflow:visible" width="86" height="92" viewBox="0 0 86 92"><defs><linearGradient id="gfd" x1="0" y1="0" x2="1" y2="0"><stop offset="0" stop-color="#ecc07a"/><stop offset="1" stop-color="#c8984c"/></linearGradient><linearGradient id="gft" x1="0" y1="0" x2="0" y2="1"><stop offset="0" stop-color="#e0b060"/><stop offset="1" stop-color="#a87838"/></linearGradient><filter id="gcms" x="-50%" y="-50%" width="200%" height="200%"><feGaussianBlur stdDeviation="2"/></filter></defs><g transform="translate(18,18)"><path d="M4 14V0H27V3H56V14Z" fill="url(#gft)" stroke="#9a6a28" stroke-width="2"/><rect x="0" y="14" width="60" height="31" rx="2" fill="url(#gfd)" stroke="#9a6a28" stroke-width="2"/><rect x="24" y="24" width="28" height="2" fill="#b08040"/><rect x="24" y="32" width="28" height="2" fill="#b08040"/></g><rect x="8" y="48" width="44" height="31" fill="#000" opacity="0.35" transform="translate(2,4)" filter="url(#gcms)"/><rect x="8" y="48" width="44" height="31" fill="#d4d4d4" stroke="#888" stroke-width="1"/><rect x="8" y="48" width="14" height="31" fill="#8e8e8e"/><circle cx="37" cy="64" r="9" fill="#e8e8e8" stroke="#aaa" stroke-width="1.5"/><circle cx="37" cy="64" r="5" fill="#28305a"/></svg>
<svg style="position:absolute;left:2130px;top:108px;overflow:visible" width="86" height="92" viewBox="0 0 86 92"><defs><linearGradient id="gfd" x1="0" y1="0" x2="1" y2="0"><stop offset="0" stop-color="#ecc07a"/><stop offset="1" stop-color="#c8984c"/></linearGradient><linearGradient id="gft" x1="0" y1="0" x2="0" y2="1"><stop offset="0" stop-color="#e0b060"/><stop offset="1" stop-color="#a87838"/></linearGradient></defs><g transform="translate(14,24)"><path d="M4 14V0H27V3H56V14Z" fill="url(#gft)" stroke="#9a6a28" stroke-width="2"/><rect x="0" y="14" width="60" height="31" rx="2" fill="url(#gfd)" stroke="#9a6a28" stroke-width="2"/><rect x="24" y="24" width="28" height="2" fill="#b08040"/><rect x="24" y="32" width="28" height="2" fill="#b08040"/></g></svg>
<svg style="position:absolute;left:2226px;top:108px;overflow:visible" width="86" height="92" viewBox="0 0 86 92"><defs><linearGradient id="gx" x1="0" y1="0" x2="1" y2="1"><stop offset="0" stop-color="#f47850"/><stop offset="0.5" stop-color="#d83818"/><stop offset="1" stop-color="#b01810"/></linearGradient></defs><path d="M19.6 20.1H35.5L43.3 31.8L51.5 20.1H67.7L52.1 45.2L67.7 71.7H51.5L43.3 59.3L35.5 71.7H19.6L34.1 45.2Z" fill="url(#gx)" stroke="#a01808" stroke-width="1"/></svg>
</body></html>
